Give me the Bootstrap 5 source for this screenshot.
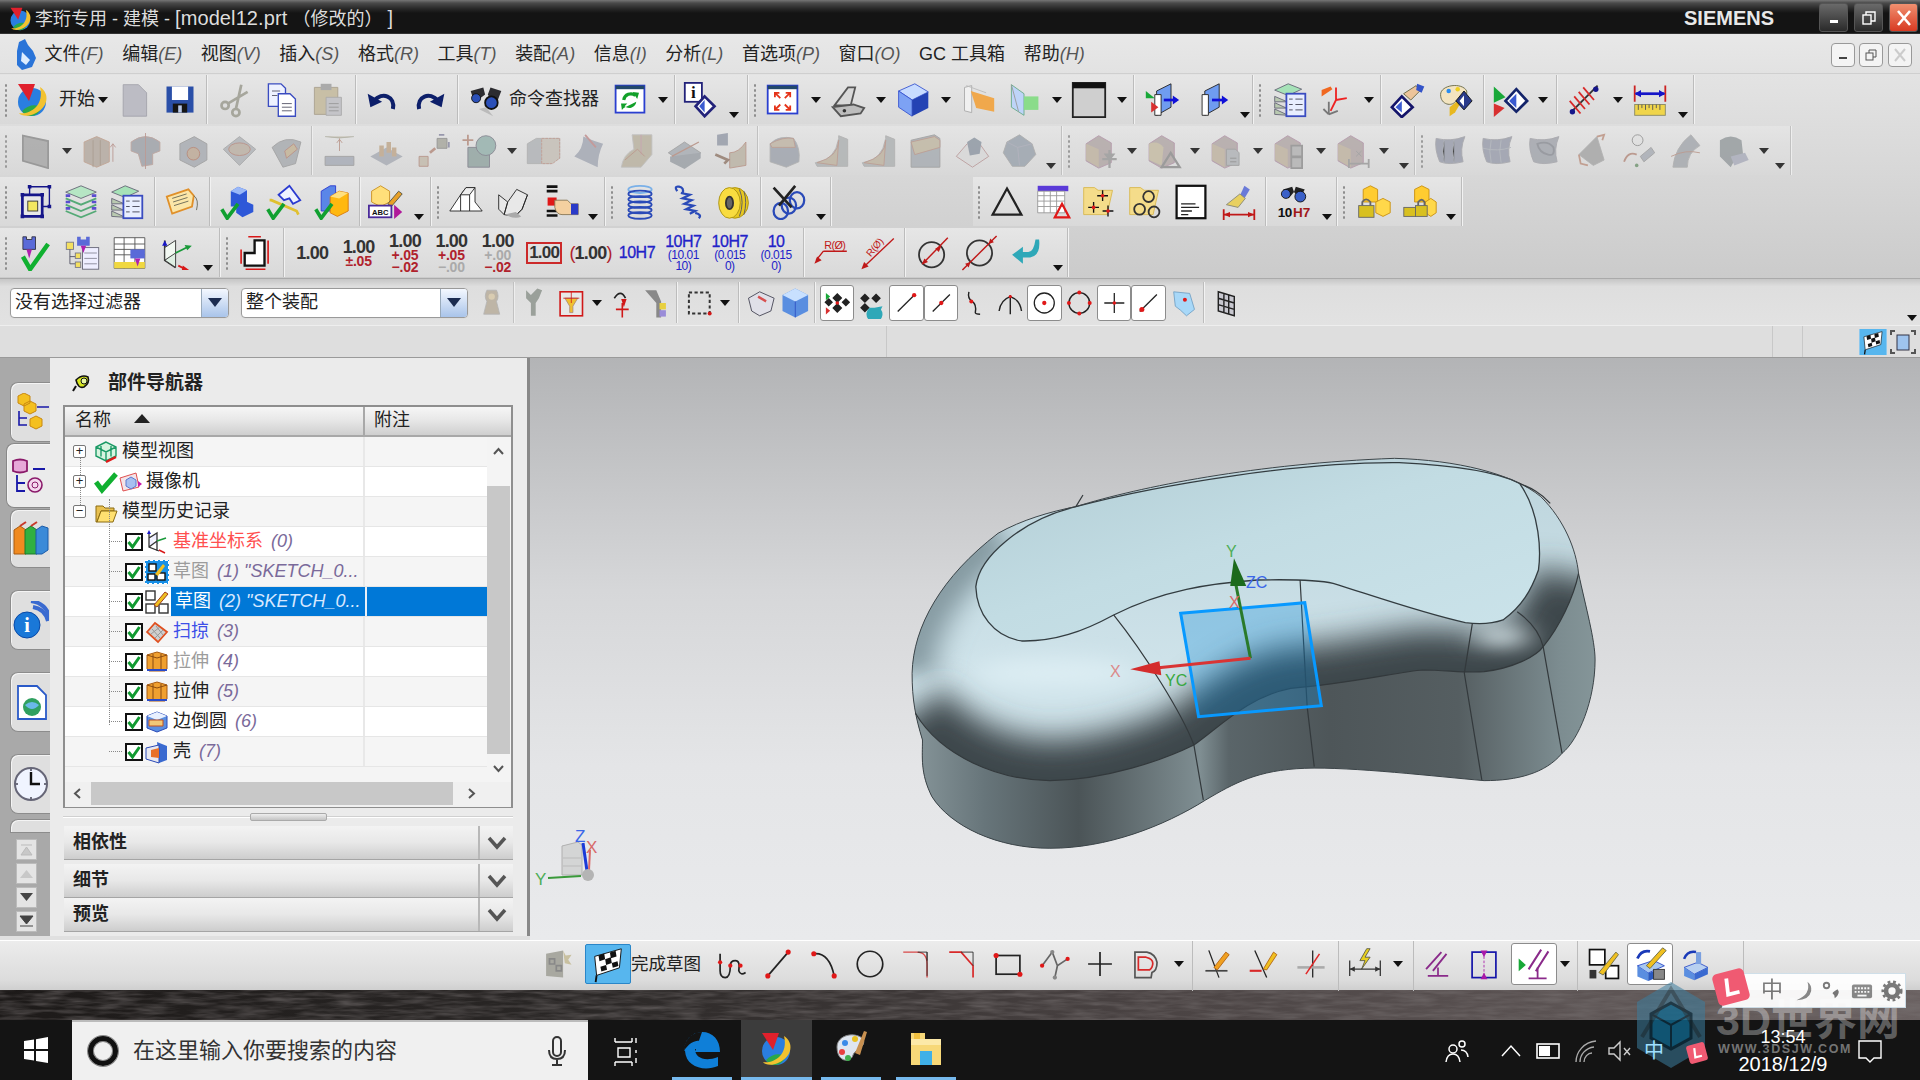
<!DOCTYPE html>
<html lang="zh-CN">
<head>
<meta charset="UTF-8">
<title>NX 建模</title>
<link href="https://cdn.jsdelivr.net/npm/bootstrap@5.3.0/dist/css/bootstrap.min.css" rel="stylesheet">
<style>
html,body{margin:0;height:100%;overflow:hidden}
body{width:1920px;height:1080px;position:relative;background:#e0e0e0;color:#222;font:18px/1.2 "Liberation Sans","Noto Sans CJK SC",sans-serif}
/* title + menu */
.titlebar{height:34px;background:linear-gradient(#767676 0,#4a4a4a 3px,#262626 9px,#141414 13px);color:#ddd;padding:4px 0 0 7px;border-bottom:1px solid #333}
.titlebar .logo{width:28px;height:28px}
.titlebar b{font-weight:400;font-size:20px;letter-spacing:.1px}
.siemens{position:absolute;left:1684px;top:6px;font-weight:700;font-size:20px;color:#e8e8e8}
.winbtn{position:absolute;top:3px;width:29px;height:29px;border-radius:3px;background:linear-gradient(#6a6a6a,#2a2a2a);border:1px solid #555;color:#fff;display:flex;align-items:center;justify-content:center}
.w-min{left:1819px}.w-max{left:1854px}.w-close{left:1889px;background:linear-gradient(#f09070,#d83a22)}
.menubar{height:40px;background:linear-gradient(#e8e8e8,#e2e2e2);padding:2px 0 0 11px;gap:18.6px;border-bottom:1px solid #cfcfcf}
.menubar em{color:#555;font-family:"Liberation Sans",sans-serif}
.menulogo{width:30px;height:34px;margin-right:-15px}
.mdibtn{position:absolute;top:43px;width:24px;height:24px;background:#f4f4f4;border:1px solid #999;border-radius:4px;display:flex;align-items:center;justify-content:center}
.m1{left:1831px}.m2{left:1859px}.m3{left:1888px}
/* toolbars */
.tb-area{background:linear-gradient(#e3e3e3,#cbcbcb);height:204px;padding-top:1px}
.tb-row{height:51px}
.tb-grp{height:49px;background:linear-gradient(#e6e6e6,#d9d9d9);box-shadow:inset -1px 0 #f2f2f2,inset -2px 0 #bcbcbc;flex:none}
.grip{width:11px;height:34px;flex:none;background:radial-gradient(circle,#8d8d8d 1px,transparent 1.4px) 4px 0/4px 5px repeat-y}
.grip-a{width:12px}.grip2{width:14px}.grip3{width:13px}
.ico{width:46px;height:36px;flex:none;display:block}
.ico-nx{width:42px;height:40px}
.w47 .ico{width:47px}
.dd{width:19px;height:36px;flex:none;display:flex;align-items:center;justify-content:center}
.dd::after{content:"";border:5px solid transparent;border-top:6px solid #111;border-bottom:0}
.dd.n{width:16px}
.dd.lo{align-items:flex-end;height:42px;padding-bottom:3px}
.tol{width:46.4px;flex:none;text-align:center;font-weight:700;font-size:18px;line-height:16px;color:#333;letter-spacing:-.8px}
.tol small{display:block;font-size:14px;line-height:12px;font-weight:700;color:#b0222c;letter-spacing:-.2px}
.tol small.off{color:#aaa}
.tol.blue{font-size:16px;letter-spacing:-.5px;font-weight:400;-webkit-text-stroke:.3px #2222c8}
.tol.blue,.tol.blue small{color:#2222c8}
.tol.blue small{font-weight:400;font-size:12px;line-height:11px;letter-spacing:-.5px;-webkit-text-stroke:0}
.tol.box span{border:2px solid #cc2a2a;padding:1px 0;display:block;margin:0 5px 0 5px;font-size:17px}
.tol.par span{color:#333}.tol.par i{color:#b0222c;font-style:normal;font-weight:400}
.pl2{padding-left:2px}.pl3{padding-left:3px}.pl4{padding-left:4px}.pl5{padding-left:5px}
.pr2{padding-right:2px}.pr3{padding-right:3px}.pr4{padding-right:4px}.pr5{padding-right:5px}.pr6{padding-right:6px}.pr7{padding-right:7px}.pr8{padding-right:8px}
.gap-l{margin-left:141px}
.mt-g{margin-left:2px}
.start-txt{margin-left:5px;font-size:18px}
.dim{opacity:.82}
.tb-row.w47 .tb-grp.dim .ico{filter:saturate(.75)}
/* selection row */
.selbar{height:47px;background:linear-gradient(#c6c6c6,#dedede 16%,#e2e2e2);padding:1px 0 0 10px;border-top:1px solid #aaa}
.sel{height:30px;background:#fff;border:1px solid #9a9a9a;border-radius:4px;flex:none;font-size:18px;padding-left:4px;overflow:hidden;box-shadow:0 0 0 1px #ddd}
.sel1{width:219px}.sel2{width:227px;margin-left:12px;margin-right:8px}
.selarrow{width:27px;height:100%;background:linear-gradient(#f4f8ff,#a9c4ea);border-left:1px solid #9ab;display:flex;align-items:center;justify-content:center;margin-left:auto}
.selarrow::after{content:"";border:7px solid transparent;border-top:9px solid #1c2c50;border-bottom:0}
.selbar .ico{width:34.6px;height:32px}
.selbar .tb-grp{background:none;height:41px}
.selbar .boxed{height:36px}
.selbar .boxed,.sk .boxed{background:#fff;border:1px solid #8c8c8c;border-radius:3px;padding:2px}
.statbar{height:33px;background:#dedede;border-top:1px solid #eee;border-bottom:1px solid #9a9a9a}
.st-a{width:887px;height:100%;border-right:1px solid #c8c8c8}
.st-b{width:886px;height:100%;border-right:1px solid #c8c8c8}
.st-c{width:30px;height:100%;border-right:1px solid #c8c8c8;margin-right:56px}
.staticon{width:28px;height:26px;flex:none;margin-right:2px}
.staticon.on{background:#8cc8ee}
/* main */
.mainarea{height:582px}
.rail{width:50px;height:578px;background:#a9a9a9;padding-top:24px;flex:none}
.rtab{margin-left:10px;height:60px;background:#dfdfdf;border:1px solid #8c8c8c;border-right:0;border-radius:8px 0 0 8px;display:flex;align-items:center;justify-content:center;box-shadow:inset 1px 1px #f4f4f4;margin-bottom:22px}
.rtab svg{width:36px;height:38px}
.rtab.t1,.rtab.on{margin-bottom:1px}
.rtab.on{margin-left:6px;height:65px;background:#ebebeb;border-color:#888}
.rtab.t3{height:59px}
.rtab.torn{height:14px;margin:-17px 0 6px 10px;border-radius:8px 0 0 0}
.navb{width:21px;height:21px;margin:0 0 3px 16px;background:#e4e4e4;border:1px solid #bbb;display:flex;align-items:center;justify-content:center}
.navb svg{width:15px;height:13px}
.panel{width:480px;height:578px;background:#ebebeb;border-right:3px solid #888;flex:none;padding:3px 0 0 13px}
.p-title{height:44px;padding-left:8px;font-weight:700;font-size:19px}
.p-title svg{width:20px;height:20px;margin-right:17px}
.treebox{width:450px;height:403px;border:2px solid #8e8e8e;background:#f4f4f4;position:relative}
.t-head{height:30px;background:linear-gradient(#f6f6f6,#e8e8e8 45%,#cfcfcf);border-bottom:2px solid #a8a8a8}
.t-col1{width:300px;padding-left:10px;height:100%;border-right:2px solid #a8a8a8;flex:none;position:relative}
.t-col2{padding-left:9px}
.sorttri{position:absolute;left:69px;top:7px;border:8px solid transparent;border-bottom:9px solid #222;border-top:0}
.t-rows{width:422px}
.t-r{height:30px;position:relative;background:#fff;border-bottom:1px solid #e6e6e6;font-size:18px;white-space:nowrap}
.t-r.alt{background:#f5f5f5}
.t-name{width:300px;height:100%;border-right:2px solid #e8e8e8;flex:none;padding-left:6px;overflow:hidden;position:relative}
.t-name em{color:#7a6a9a;margin-left:8px}
.t-r.kid .t-name{padding-left:60px}
.t-r.kid::before{content:"";position:absolute;left:44px;top:14px;width:13px;border-top:1px dotted #888}
.t-vline{position:absolute;left:44px;top:92px;height:226px;border-left:1px dotted #888}
.t-vline2{position:absolute;left:15px;top:40px;height:60px;border-left:1px dotted #888}
.expander{width:13px;height:13px;border:1px solid #777;border-radius:2px;background:#fff;flex:none;margin:0 8px 0 2px;font-size:13px;line-height:10px;text-align:center;position:relative;z-index:1}
.tic{width:24px;height:24px;flex:none}
.cbx{width:18px;height:18px;flex:none;margin-right:2px}
.txt-red{color:#ff4f4f}.txt-gray{color:#9c9c9c}.txt-blue{color:#3d4fe8}
.t-sel{background:#0078d7;color:#fff;position:absolute;left:106px;top:0;width:316px;height:29px;padding-left:4px;overflow:hidden}
.t-sel em{color:#d8e8ff;margin-left:8px}
.t-sel i.cut{width:192px;height:100%;display:flex;align-items:center;font-style:normal;border-right:2px solid #e8f0f8;flex:none}
.vs{position:absolute;left:422px;top:30px;width:24px;height:346px;background:#f4f4f4}
.vs-thumb{position:absolute;top:49px;left:0;width:23px;height:268px;background:#c8c8c8}
.hs{position:absolute;left:0;top:375px;width:446px;height:25px;background:#f0f0f0}
.hs-thumb{position:absolute;left:26px;top:0;width:362px;height:23px;background:#c8c8c8}
.chev{position:absolute;width:13px;height:13px}
.c-up{left:5px;top:8px}.c-dn{left:5px;top:325px}.c-l{left:6px;top:5px}.c-r{left:400px;top:5px}
.splitter{height:18px;width:450px;position:relative}
.splitter::before{content:"";position:absolute;left:0;right:0;top:8px;border-top:1px solid #d0d0d0;box-shadow:0 1px #fff}
.split-h{position:absolute;left:187px;top:5px;width:77px;height:8px;background:linear-gradient(#eee,#c4c4c4);border:1px solid #aaa;border-radius:2px}
.acc-r{width:449px;height:34px;background:linear-gradient(#f3f3f3,#e8e8e8 50%,#cdcdcd);border-bottom:1px solid #a5a5a5;margin-left:1px;font-weight:700;padding-left:9px;font-size:18px}
.acc-sep{margin-left:auto;width:35px;height:100%;border-left:2px solid #b8b8b8;display:flex;align-items:center;justify-content:center}
.acc-sep svg{width:20px;height:14px}
.viewport{width:1390px;height:582px;background:linear-gradient(#b3b4b6,#d6d7d9 40%,#e4e5e7 70%,#e9eaec);flex:none;overflow:hidden}
.scene{display:block}
.lines path{vector-effect:non-scaling-stroke}
/* sketch toolbar */
.sk{height:50px;background:linear-gradient(#ececec,#dcdcdc 80%,#cfcfcf);border-top:1px solid #fff;padding-left:535px;position:relative}
.sk .tb-grp{background:none;box-shadow:none;height:46px}
.sk .ico{height:34px}
.sk .skend{height:50px;background:#bcbcbc;width:1px;margin-right:-1px;flex:none}
.sk .boxed{height:42px}
.sk-txt{font-size:17.5px;margin-right:8px;white-space:nowrap}
.flagon{background:#57b6ee;border:1px solid #2a86c8;border-radius:2px;margin-left:4px}
.sk .flagon{height:40px}
/* desktop + taskbar */
.desk{height:30px;background:linear-gradient(90deg,#1d1a19,#2a2726 30%,#4a4343 60%,#6a6161);overflow:hidden}
.taskbar{height:60px;background:#141414;color:#fff}
.startbtn{width:72px;height:60px;flex:none}
.searchbox{width:516px;height:60px;background:#f0f0f0;color:#333;font-size:22px;padding-left:16px;border-top:2px solid #bbb;flex:none}
.searchbox .rng{width:30px;height:30px;border:5px solid #111;border-radius:50%;margin-right:15px;box-shadow:0 0 0 1px #888,inset 0 0 0 1px #888}
.mic{width:22px;height:32px;margin-left:auto;margin-right:20px}
.tk{height:60px;flex:none;display:flex;align-items:center;justify-content:center}
.tk svg{width:40px;height:40px}
.tk.act{border-bottom:3px solid #76b9ed}
.tk-view{width:72px}
.tk-e{width:60px;margin-left:12px}
.tk-nx{width:71px;margin-left:9px;background:#3c3c3c}
.tk-p{width:60px;margin-left:9px}
.tk-f{width:60px;margin-left:15px}
.tray-i{position:absolute;top:1038px;width:26px;height:26px}
.tr1{left:1444px}.tr2{left:1498px}.tr3{left:1535px}.tr4{left:1572px}.tr5{left:1606px}.tr6{left:1857px}
.clock{position:absolute;left:1729px;top:1026px;width:108px;text-align:center;color:#fff}
.clock .tm{font-size:18px;line-height:22px}
.clock .dt{font-size:20px;line-height:28px;margin-top:2px}
.trayzh{position:absolute;left:1644px;top:1039px;font-size:20px;color:#9fe0ff;z-index:4}
/* overlays */
.wm-hex{position:absolute;left:1636px;top:981px;width:70px;height:88px;opacity:.75}
.wm-big{position:absolute;left:1716px;top:1000px;font:700 43px/40px "Liberation Sans","Noto Sans CJK SC",sans-serif;color:rgba(255,255,255,.32);white-space:nowrap}
.wm-url{position:absolute;left:1718px;top:1042px;font:700 12.5px/14px "Liberation Sans",sans-serif;letter-spacing:1.6px;color:rgba(255,255,255,.42);white-space:nowrap}
.ime{position:absolute;left:1722px;top:973px;width:184px;height:35px;background:#fff;border:1px solid #cfe0ea;color:#777;padding-left:38px;gap:8px;font-size:22px;opacity:.95}
.ime svg{width:22px;height:22px;flex:none}
.imel{position:absolute;left:1712px;top:968px;width:38px;height:38px;z-index:3}
.trayl{position:absolute;left:1686px;top:1042px;width:22px;height:22px;z-index:3}
</style>
</head>
<body>

<svg width="0" height="0" class="position-absolute">
<defs>
<linearGradient id="gFace" x1="0" y1="0" x2="1" y2="1"><stop offset="0" stop-color="#b2cdd5"/><stop offset=".45" stop-color="#c2dce3"/><stop offset="1" stop-color="#cbe3ea"/></linearGradient>
<linearGradient id="gFillet" x1="0" y1="0" x2="0" y2="1"><stop offset="0" stop-color="#bcd4dc"/><stop offset=".55" stop-color="#cfe3ea"/><stop offset="1" stop-color="#cfe3ea"/></linearGradient>
<linearGradient id="gWall" x1="0" y1="0" x2="1" y2="0"><stop offset="0" stop-color="#8d9ca0"/><stop offset=".12" stop-color="#67757a"/><stop offset=".25" stop-color="#4b5457"/><stop offset=".42" stop-color="#7f8e92"/><stop offset=".46" stop-color="#5a6569"/><stop offset=".6" stop-color="#4e5659"/><stop offset=".78" stop-color="#555e61"/><stop offset=".92" stop-color="#7c8c90"/><stop offset="1" stop-color="#8a9b9e"/></linearGradient>
<filter id="blur1" x="-20%" y="-50%" width="140%" height="200%"><feGaussianBlur stdDeviation="30 48"/></filter>
<filter id="blur2" x="-100%" y="-200%" width="300%" height="500%"><feGaussianBlur stdDeviation="30 30"/></filter>
<filter id="grain"><feTurbulence type="fractalNoise" baseFrequency=".03 .25" numOctaves="3"/><feColorMatrix values="0 0 0 0 .2 0 0 0 0 .18 0 0 0 0 .18 0 0 0 1 -.35"/></filter>
<clipPath id="clipBody"><path d="M415 200C550 140 800 70 1090 55C1220 60 1340 100 1400 170C1450 240 1475 330 1480 400C1495 500 1515 600 1515 660C1515 780 1480 900 1445 940C1410 1000 1350 1022 1280 1022C1180 1010 1000 980 900 985C800 990 750 1030 690 1080C600 1160 480 1225 360 1225C250 1225 150 1160 110 1070C85 1000 90 950 90 900C75 830 68 780 68 700C70 560 130 410 250 280C300 240 360 215 415 200Z"/></clipPath>
</defs>
<symbol id="nx" viewBox="0 0 40 40"><circle cx="19" cy="22" r="14" fill="#2a7ee0"/><path d="M9 31q9-9 20-4-4 9-11 9-6 0-9-5z" fill="#2aa84a"/><path d="M5 4h17l-6 17z" fill="#e0202c"/><path d="M27 7c10 6 9 21-6 27-6 3-13 2-15-1 9 2 26-6 21-26z" fill="#f2c230"/></symbol>
<symbol id="new" viewBox="0 0 40 40"><path d="M8 3h17l9 9v26H8z" fill="#bcbcc4" stroke="#a4a4ac"/></symbol>
<symbol id="save" viewBox="0 0 40 40"><path d="M5 5h30v29H5z" fill="#2a4fa8"/><path d="M11 5h18v15H11z" fill="#fff"/><path d="M12 24h16v10H12z" fill="#151515"/><path d="M18 26h4v8h-4z" fill="#b7c7e8"/></symbol>
<symbol id="cut" viewBox="0 0 40 40"><g fill="none" stroke="#a6a69c" stroke-width="3"><circle cx="9" cy="26" r="4"/><circle cx="21" cy="34" r="4"/><path d="M12 24L34 11M21 30L27 3"/></g></symbol>
<symbol id="copy" viewBox="0 0 40 40"><path d="M6 2h14l5 5v20H6z" fill="#eef2ff" stroke="#3a4cc0" stroke-width="1.5"/><path d="M17 13h13l6 6v19H17z" fill="#fff" stroke="#3a4cc0" stroke-width="1.5"/><path d="M10 10h9M10 15h6M21 24h11M21 28h11M21 32h11" stroke="#556"/></symbol>
<symbol id="paste" viewBox="0 0 40 40"><path d="M6 6h26v30H6z" fill="#c8bfa6" stroke="#aaa290"/><path d="M13 2h12v7H13z" fill="#aaa"/><path d="M19 17h17v20H19z" fill="#c4c4c8" stroke="#aaa"/><path d="M22 24h11M22 28h11M22 32h11" stroke="#999"/></symbol>
<symbol id="undo" viewBox="0 0 40 40"><path d="M31 30c3-14-12-20-21-9" fill="none" stroke="#0d1f6a" stroke-width="4.5"/><path d="M3 13l3 15 13-6z" fill="#0d1f6a"/></symbol>
<symbol id="redo" viewBox="0 0 40 40"><path d="M9 30c-3-14 12-20 21-9" fill="none" stroke="#0d1f6a" stroke-width="4.5"/><path d="M37 13l-3 15-13-6z" fill="#0d1f6a"/></symbol>
<symbol id="binoc" viewBox="0 0 40 40"><path d="M3 10l14-4 2 8-12 9zM37 10l-12-4-3 8 8 14z" fill="#2c2c30"/><circle cx="9" cy="18" r="5" fill="#2b50b8" stroke="#111"/><circle cx="26" cy="23" r="7" fill="#2b50b8" stroke="#111" stroke-width="2"/><path d="M12 30l16 8-8-10z" fill="#bbb"/></symbol>
<symbol id="refresh" viewBox="0 0 40 40"><rect x="4" y="4" width="32" height="30" fill="#fff" stroke="#2a3fd0" stroke-width="2"/><rect x="4" y="4" width="32" height="4" fill="#22486a"/><path d="M13 20a8 8 0 0 1 13-5" fill="none" stroke="#12a02a" stroke-width="3.5"/><path d="M23 11l7 1-2 7zM27 22a8 8 0 0 1-13 5l3-3-7 0 1 7 2-2" fill="#12a02a"/></symbol>
<symbol id="fit" viewBox="0 0 40 40"><rect x="3" y="4" width="33" height="31" fill="#fff" stroke="#2a3fd0" stroke-width="2"/><rect x="3" y="4" width="33" height="4" fill="#22486a"/><path d="M12 13l5 5M27 13l-5 5M12 30l5-5M27 30l-5-5M11 17v-5h5M28 17v-5h-5M11 26v5h5M28 26v5h-5" fill="none" stroke="#e5341a" stroke-width="2"/></symbol>
<symbol id="scan" viewBox="0 0 40 40"><path d="M5 26L20 6h8l-5 20z" fill="#d9d9d9" stroke="#555" stroke-width="2"/><path d="M3 28l23-3 12 4-4 6-22 3z" fill="#bdbdbd" stroke="#555" stroke-width="2"/><circle cx="16" cy="32" r="2" fill="#333"/></symbol>
<symbol id="cube" viewBox="0 0 40 40"><path d="M4 10L22 2l15 9-18 9z" fill="#c8dcff" stroke="#3a56d0"/><path d="M4 10l15 10v18L4 28z" fill="#7da2f4" stroke="#3a56d0"/><path d="M19 20l18-9v18l-18 9z" fill="#2443b4"/></symbol>
<symbol id="shade" viewBox="0 0 40 40"><path d="M5 6l8-2 0 30-8-2z" fill="#f0f0f0" stroke="#aaa"/><path d="M12 10l26 8v15l-20-4z" fill="#f0a84c"/><path d="M7 4l22 8" stroke="#bbb"/></symbol>
<symbol id="pane" viewBox="0 0 40 40"><path d="M6 3l14 10 0 24-14-9z" fill="#bed4f8" stroke="#6a8"/><path d="M20 16h16v15H20z" fill="#8adc8a"/><path d="M6 3l8 30" stroke="#999"/></symbol>
<symbol id="bwin" viewBox="0 0 40 40"><rect x="2" y="1" width="36" height="38" fill="#cfcfcf" stroke="#222" stroke-width="2"/><rect x="2" y="1" width="36" height="6" fill="#111"/></symbol>
<symbol id="vis1" viewBox="0 0 40 40"><path d="M14 10l16-8v26l-16 9z" fill="#6f9cf0" stroke="#222"/><path d="M12 14h7v23h-7z" fill="#fff" stroke="#222"/><path d="M2 10l10 8H2z" fill="#18a838"/><path d="M8 22l8 6-8 6z" fill="#d83030"/><path d="M22 20h14" stroke="#1010d8" stroke-width="3"/><path d="M39 20l-7-5v10z" fill="#1010d8"/></symbol>
<symbol id="vis2" viewBox="0 0 40 40"><path d="M12 10l16-8v26l-16 9z" fill="#6f9cf0" stroke="#222"/><path d="M9 14h7v23H9z" fill="#fff" stroke="#222"/><path d="M20 20h14" stroke="#1010d8" stroke-width="3"/><path d="M38 20l-7-5v10z" fill="#1010d8"/></symbol>
<symbol id="llist" viewBox="0 0 40 40"><path d="M3 9l15-7 15 6-15 7z" fill="#a6e2b8" stroke="#667"/><path d="M3 16l14 6-14 0zM3 23l13 6-13 0zM3 30l15 7-15-1z" fill="#b9c9b0" stroke="#667"/><rect x="16" y="13" width="21" height="25" fill="#e8eeff" stroke="#3a4cc0" stroke-width="2"/><path d="M19 19h4M26 19h8M19 25h4M26 25h8M19 31h4M26 31h8" stroke="#445"/></symbol>
<symbol id="layers" viewBox="0 0 40 40"><path d="M3 9L20 2l17 7-17 7z" fill="#b6e6c4" stroke="#667"/><path d="M3 16l17 7 17-7M3 23l17 7 17-7M3 30l17 7 17-7" fill="none" stroke="#5a7" stroke-width="2"/><path d="M3 13h5M32 13h5M3 20h5M32 20h5M3 27h5M32 27h5" stroke="#5a4cd0" stroke-width="3"/></symbol>
<symbol id="csys" viewBox="0 0 40 40"><path d="M20 20l12-2M20 20l-6 12M20 6v14" stroke="#e22" stroke-width="2"/><path d="M4 16l12-8-2-3-10 4z" fill="#f06820"/><path d="M12 22v14M12 36l10-4M12 36l-6-6" stroke="#777" stroke-width="2" fill="none"/></symbol>
<symbol id="handd" viewBox="0 0 40 40"><path d="M14 13l14-9 4 6-10 10z" fill="#ecc49a" stroke="#664"/><path d="M29 2l8 3-3 7-6-3z" fill="#3454c8"/><path d="M12 16l12 12-12 11L1 28z" fill="#fff" stroke="#14146a" stroke-width="3"/><path d="M12 21v13l-7-6z" fill="#3a5ad0"/></symbol>
<symbol id="palette" viewBox="0 0 40 40"><path d="M4 14C4 3 28 0 33 10c2 7-10 8-13 12-3 5-16 4-16-8z" fill="#f3e4c0" stroke="#664"/><circle cx="13" cy="10" r="2.500" fill="#2a8cf0"/><circle cx="23" cy="8" r="2.500" fill="#f0d020"/><path d="M14 28l10-8 3 2-7 12-6 4z" fill="#e8b820"/><path d="M30 10l9 11-9 10-9-10z" fill="#2a3a8a" stroke="#111"/><path d="M30 15v12l-5-6z" fill="#fff"/></symbol>
<symbol id="playd" viewBox="0 0 40 40"><path d="M2 5l13 12-13 6z" fill="#18a838"/><path d="M2 24l12 5-12 10z" fill="#d83030"/><path d="M27 8l12 13-12 12-12-12z" fill="#fff" stroke="#14246a" stroke-width="3"/><path d="M27 13v16l-8-8z" fill="#3a5ad0"/></symbol>
<symbol id="hatch" viewBox="0 0 40 40"><path d="M4 34L34 4" stroke="#333" stroke-width="2"/><path d="M8 16l12 14M13 11l12 14M18 6l12 14M3 21l12 14" stroke="#d82a2a" stroke-width="2"/><circle cx="6" cy="33" r="3" fill="#16168a"/><circle cx="32" cy="8" r="3" fill="#16168a"/></symbol>
<symbol id="ruler" viewBox="0 0 40 40"><path d="M3 4v18M37 4v18" stroke="#c22" stroke-width="2"/><path d="M4 13h32" stroke="#1414c8" stroke-width="3"/><path d="M3 13l7-4v8zM37 13l-7-4v8z" fill="#1414c8"/><rect x="3" y="25" width="34" height="12" fill="#f0d54a" stroke="#886"/><path d="M7 25v6M11 25v4M15 25v6M19 25v4M23 25v6M27 25v4M31 25v6" stroke="#555"/></symbol>
<symbol id="g-plane" viewBox="0 0 40 40"><path d="M6 3l28 6v30L6 31z" fill="#a8a8a8" stroke="#8c8c8c" stroke-width="2"/></symbol>
<symbol id="g-ext" viewBox="0 0 40 40"><path d="M4 10l14-6 14 6v22l-14 6-14-6z" fill="#b8a99c" stroke="#c69a80"/><path d="M14 8v30M22 8v28" stroke="#a5907e"/><path d="M36 12v20M33 16l3-4 3 4" stroke="#c08a80" fill="none"/></symbol>
<symbol id="g-rev" viewBox="0 0 40 40"><path d="M4 10q16-12 32 0v10l-8 3v12l-12 2-4-14-8-3z" fill="#9ea2ac" stroke="#c09a90"/><path d="M20 0v40" stroke="#c08a80"/></symbol>
<symbol id="g-hole" viewBox="0 0 40 40"><path d="M6 12l16-8 14 8v18l-14 8-16-8z" fill="#a8acb4" stroke="#999"/><circle cx="21" cy="23" r="7" fill="#c4a98e" stroke="#c07860"/></symbol>
<symbol id="g-boss" viewBox="0 0 40 40"><path d="M2 18l18-14 18 14-18 18z" fill="#b0b4ba" stroke="#a0a0a0"/><ellipse cx="20" cy="18" rx="12" ry="7" fill="#bfb0a0" stroke="#c08070"/></symbol>
<symbol id="g-pock" viewBox="0 0 40 40"><path d="M4 16Q18 2 36 10l-6 24-14 4z" fill="#a8acb2" stroke="#999"/><path d="M18 20l10-8 4 6-12 10z" fill="#c9b48c" stroke="#c08070"/></symbol>
<symbol id="g-pad" viewBox="0 0 40 40"><path d="M4 4q16 3 32 0" fill="#c2b79e" stroke="#aa9"/><path d="M20 6v14M17 11l3-4 3 4" stroke="#c08a78" fill="none"/><path d="M4 26h32v10H4z" fill="#a6adba" stroke="#999"/></symbol>
<symbol id="g-pads" viewBox="0 0 40 40"><path d="M2 26l18-10 18 10-18 10z" fill="#a8adb8"/><path d="M12 14h5v12h-5zM20 10h5v12h-5zM26 16h5v10h-5z" fill="#c7a781"/></symbol>
<symbol id="g-arr" viewBox="0 0 40 40"><path d="M4 26h10v11H4z" fill="#c7bba8" stroke="#b87"/><path d="M24 6h11v11H24z" fill="#a9a99c" stroke="#888"/><path d="M16 22l6-5" stroke="#c08a78" stroke-width="3"/><path d="M26 2h6M37 10v6" stroke="#88a" stroke-width="2"/></symbol>
<symbol id="g-uni" viewBox="0 0 40 40"><path d="M6 16h24v22H6z" fill="#8fa6a2" stroke="#778"/><circle cx="26" cy="14" r="11" fill="#8fb4ae" stroke="#778"/><path d="M6 2v12M0 8h12" stroke="#c08a78" stroke-width="2"/></symbol>
<symbol id="g-blk" viewBox="0 0 40 40"><path d="M2 12l10-6h26v22l-10 6H2z" fill="#b0b4b8" stroke="#aaa"/><path d="M18 6h20v22l-8 6H18z" fill="#c8c0b4" stroke="#c89080" stroke-dasharray="3 1"/></symbol>
<symbol id="g-cut" viewBox="0 0 40 40"><path d="M12 4q14 6 22 8-6 12-6 26L2 26q10-8 10-22z" fill="#a3a9b8"/><path d="M14 2l12 14" stroke="#c88" stroke-width="2"/></symbol>
<symbol id="g-pipe" viewBox="0 0 40 40"><path d="M14 2h22v22L24 38H2q2-14 14-20z" fill="#bdb29a" stroke="#bbb"/><path d="M24 2v22" stroke="#c9a"/><path d="M6 30l14-12 8 8" stroke="#c08a78" fill="none"/></symbol>
<symbol id="g-sp" viewBox="0 0 40 40"><path d="M2 22l18-12 18 12-18 12z" fill="#a8aeb6" stroke="#999"/><path d="M4 26v6l16 8 18-12v-6" fill="#9aa0a8"/><path d="M6 26L36 10" stroke="#c08a78" stroke-width="1.500"/></symbol>
<symbol id="g-trim" viewBox="0 0 40 40"><path d="M4 2l12-2v14H4z" fill="#949cae"/><path d="M18 22q10 0 18-12v26l-18 3z" fill="#bdb4a0" stroke="#c08a78"/><path d="M2 24l14 6-4 4" stroke="#9a7a66" stroke-width="3" fill="none"/></symbol>
<symbol id="g-f1" viewBox="0 0 40 40"><path d="M4 12Q14 2 30 6q8 10 6 26l-14 6L4 32z" fill="#9da4b0" stroke="#aaa"/><path d="M4 12q14-8 26-6l2 10H6z" fill="#c4b6a0" stroke="#c09080"/></symbol>
<symbol id="g-f2" viewBox="0 0 40 40"><path d="M28 3l10 4v30H4l-2-4q22-2 26-27z" fill="#aeb2b4" stroke="#aaa"/><path d="M28 8q0 18-24 25l22 3z" fill="#c2b49a" stroke="#c09080"/></symbol>
<symbol id="g-f3" viewBox="0 0 40 40"><path d="M4 8l26-6 6 4v32H4z" fill="#a6adb4" stroke="#999"/><path d="M4 10l26-6 6 4v8L8 24z" fill="#c4b89c" stroke="#c09080"/></symbol>
<symbol id="g-frm" viewBox="0 0 40 40"><path d="M2 26L14 12h14l10 14-18 12z" fill="#d9d9d9" stroke="#c09090"/><path d="M14 10l8-5 8 5-2 13-11 2z" fill="#8c98a8"/></symbol>
<symbol id="g-gem" viewBox="0 0 40 40"><path d="M20 2l14 10 4 12-12 13H12L2 22 6 10z" fill="#98a4b2" stroke="#a5a5a5"/><path d="M6 10l12 6 16-4M18 16l2 20" stroke="#aab" fill="none"/></symbol>
<symbol id="g-c1" viewBox="0 0 40 40"><path d="M4 12L18 3l14 8v22l-14 6-14-8z" fill="#b5a7a6" stroke="#b68ca8"/><path d="M4 12l14 6v20L4 30z" fill="#c4b49a"/><path d="M26 24l4 5 4-5-8 0zM30 19v20M22 29h16" stroke="#9a9a9a" stroke-width="2.500" fill="none"/></symbol>
<symbol id="g-c2" viewBox="0 0 40 40"><path d="M4 12L18 3l14 8v22l-14 6-14-8z" fill="#b5a7a6" stroke="#b68ca8"/><path d="M4 12q10-4 16 4l-2 20-14-6z" fill="#c9bc9c"/><path d="M28 22l10 16H18z" fill="none" stroke="#8e8e8e" stroke-width="2.500"/></symbol>
<symbol id="g-c3" viewBox="0 0 40 40"><path d="M4 12L18 3l14 8v22l-14 6-14-8z" fill="#b5a7a6" stroke="#b68ca8"/><path d="M4 12l14 6v20L4 30z" fill="#c4b49a"/><path d="M20 18h10l4 4v14H20z" fill="#b0b4b8" stroke="#999"/><path d="M24 28h7M24 32h7" stroke="#888"/></symbol>
<symbol id="g-c4" viewBox="0 0 40 40"><path d="M4 12L18 3l14 8v22l-14 6-14-8z" fill="#b5a7a6" stroke="#b68ca8"/><path d="M4 12l14 6v20L4 30z" fill="#c4b49a"/><path d="M22 14h12v12H22zM22 27h12v12H22z" fill="#b4b4b4" stroke="#909090" stroke-width="2"/></symbol>
<symbol id="g-c5" viewBox="0 0 40 40"><path d="M4 12L18 3l14 8v22l-14 6-14-8z" fill="#b5a7a6" stroke="#b68ca8"/><path d="M4 12l14 6v20L4 30z" fill="#c4b49a"/><path d="M16 29v10M38 29v10M16 34h22" stroke="#9a9a9a" stroke-width="2"/><path d="M24 20l6 6M30 20l-6 6" stroke="#999"/></symbol>
<symbol id="g-s1" viewBox="0 0 40 40"><path d="M4 6q16 4 32-2-6 14-2 28Q18 36 8 32 2 18 4 6z" fill="#989eb0" stroke="#a0a0a8"/><path d="M13 8q-3 12 0 25M24 8q-3 12 0 25" stroke="#aeb2bc"/></symbol>
<symbol id="g-s2" viewBox="0 0 40 40"><path d="M4 6q16 4 32-2-6 14-2 28Q18 36 8 32 2 18 4 6z" fill="#989eb0" stroke="#a0a0a8"/><path d="M13 8q-3 12 0 25M24 8q-3 12 0 25M4 17q16 4 31-1" stroke="#aeb2bc" fill="none"/></symbol>
<symbol id="g-s3" viewBox="0 0 40 40"><path d="M4 6q16 4 32-2-6 14-2 28Q18 36 8 32 2 18 4 6z" fill="#a2a6b0" stroke="#a0a0a8"/><path d="M12 12q12-4 18 4 2 10-6 8-10-2-12-12z" fill="none" stroke="#8a8e98" stroke-width="2"/></symbol>
<symbol id="g-s4" viewBox="0 0 40 40"><path d="M6 24L26 4l8 26-12 6z" fill="#a6a6a6" stroke="#aaa"/><path d="M26 4l8-2-2 6M6 24l2 10 8 2" stroke="#c8907a" stroke-width="2" fill="none"/></symbol>
<symbol id="g-s5" viewBox="0 0 40 40"><circle cx="19" cy="8" r="6" fill="none" stroke="#888"/><path d="M4 32q4-12 14-8" stroke="#c08a78" fill="none" stroke-width="2"/><path d="M22 26l12-10 4 6-12 10z" fill="#a8adb8" stroke="#999"/><circle cx="18" cy="36" r="2" fill="#6a9a6a"/></symbol>
<symbol id="g-s6" viewBox="0 0 40 40"><path d="M6 38q2-22 20-36l10 12Q22 22 22 38z" fill="#a4a9b0" stroke="#aaa"/><path d="M4 26q16-8 32-4" stroke="#c08a78" fill="none"/></symbol>
<symbol id="g-s7" viewBox="0 0 40 40"><path d="M6 8q12-8 24 0l2 18q-10 2-14 12L6 26z" fill="#959ca0"/><path d="M18 26l16-4 4 8-16 6z" fill="#a9adc0"/></symbol>
<symbol id="boxs" viewBox="0 0 40 40"><path d="M14 3h22v22H14z" fill="none" stroke="#16168a" stroke-width="1.500"/><path d="M6 12h22v24H6z" fill="#e8e8e8" stroke="#16168a" stroke-width="3"/><rect x="12" y="19" width="11" height="11" fill="#f4e860" stroke="#333"/><path d="M4 10h4v4H4zM26 10h4v4h-4zM4 34h4v4H4zM26 34h4v4h-4zM34 1h4v4h-4zM34 23h4v4h-4zM12 1h4v4h-4z" fill="#16168a"/></symbol>
<symbol id="tag" viewBox="0 0 40 40"><path d="M2 14l24-8 6 7-2 12-22 8z" fill="#fbe6a8" stroke="#e0902a" stroke-width="2"/><path d="M8 16l16-5M9 20l16-5M10 24l16-5" stroke="#665"/><path d="M32 13q6 4 3 16" stroke="#665" fill="none"/></symbol>
<symbol id="as1" viewBox="0 0 40 40"><path d="M12 8l8-5 10 4v18l-18 0z" fill="#2e58d8"/><path d="M18 24l10-5 9 4v8l-12 6-7-5z" fill="#2e58d8"/><path d="M12 8l8-5 10 4-8 5z" fill="#9ab8f8"/><path d="M2 28l6 10L20 22" fill="none" stroke="#10a030" stroke-width="4"/></symbol>
<symbol id="as2" viewBox="0 0 40 40"><path d="M14 12l12-10 12 16-8 4-4-6-6 2z" fill="#eef2ff" stroke="#2a3ad0" stroke-width="2"/><path d="M4 18h2l28 12 2 4" stroke="#e0c030" stroke-width="3" fill="none"/><path d="M2 28l6 10L20 22" fill="none" stroke="#10a030" stroke-width="4"/></symbol>
<symbol id="as3" viewBox="0 0 40 40"><path d="M8 8l10-6h6v28H8z" fill="#5a86e8" stroke="#2a3ad0"/><path d="M18 14l10-6 10 2v20l-12 6-8-4z" fill="#ffb810" stroke="#d87a10"/><path d="M18 14l10-6 10 2-10 6z" fill="#ffe080"/><path d="M2 28l6 10L20 22" fill="none" stroke="#10a030" stroke-width="4"/></symbol>
<symbol id="wave1" viewBox="0 0 40 40"><path d="M2 30l12-18 6-8 10 0v16l8 10H2z" fill="#fff" stroke="#222"/><path d="M14 12l6-8 10 0-6 8zM14 12v18M24 12v18" stroke="#222" fill="#eee"/></symbol>
<symbol id="wave2" viewBox="0 0 40 40"><path d="M3 12l10 8-4 14L3 28zM13 20l10-14 12 6-6 16-8 8-12-2z" fill="#e8e8e8" stroke="#222"/><path d="M21 36l8-8 6-16" stroke="#222" fill="none"/><path d="M10 34q12 6 18 2l-6-5z" fill="#aaa"/></symbol>
<symbol id="hdim" viewBox="0 0 40 40"><path d="M3 3h12M3 8h12M3 30h12M3 35h12" stroke="#111" stroke-width="3"/><rect x="4" y="15" width="10" height="9" fill="#e01818"/><path d="M12 18h14l4 4h8v12H20q-6 0-8-8z" fill="#f4d0a0" stroke="#875"/><rect x="30" y="22" width="8" height="12" fill="#2a3ac8"/></symbol>
<symbol id="coil" viewBox="0 0 40 40"><ellipse cx="20" cy="6" rx="13" ry="4" fill="none" stroke="#7ab0e8" stroke-width="2"/><g fill="none" stroke="#2a4ab8" stroke-width="2"><ellipse cx="20" cy="11" rx="13" ry="3.600"/><ellipse cx="20" cy="17" rx="13" ry="3.600"/><ellipse cx="20" cy="23" rx="13" ry="3.600"/><ellipse cx="20" cy="29" rx="13" ry="3.600"/><ellipse cx="20" cy="35" rx="13" ry="3.600"/></g></symbol>
<symbol id="spring" viewBox="0 0 40 40"><g fill="none" stroke="#2a4ab8" stroke-width="2.500"><path d="M8 8q-4-6 2-5t4 7"/><path d="M12 10l10 2-8 4 10 2-8 4 10 2-8 4 10 2-6 3"/><path d="M28 32q8 2 4 6"/></g></symbol>
<symbol id="washer" viewBox="0 0 40 40"><ellipse cx="21" cy="21" rx="15" ry="17" fill="#e8c820" stroke="#a89010"/><ellipse cx="15" cy="21" rx="12" ry="17" fill="#f8dc40" stroke="#a89010"/><ellipse cx="15" cy="21" rx="4" ry="7" fill="#666" stroke="#333" stroke-width="2"/><path d="M26 6q6 14 0 30M31 8q4 12 0 26" stroke="#556" fill="none"/></symbol>
<symbol id="xspr" viewBox="0 0 40 40"><g fill="none" stroke="#2a4ab8" stroke-width="2.500"><ellipse cx="12" cy="30" rx="8" ry="9"/><ellipse cx="21" cy="24" rx="8" ry="9"/><ellipse cx="30" cy="18" rx="8" ry="9"/></g><path d="M4 4l20 22M28 2L10 24" stroke="#222" stroke-width="3"/></symbol>
<symbol id="tri" viewBox="0 0 40 40"><path d="M20 5l16 29H4z" fill="none" stroke="#222" stroke-width="2.500"/></symbol>
<symbol id="tbl" viewBox="0 0 40 40"><rect x="3" y="2" width="34" height="6" fill="#5a3ad8"/><path d="M3 8h30v24H3zM3 13h30M3 19h30M3 25h30M10 8v24M17 8v24M24 8v24" fill="#fff" stroke="#999"/><path d="M30 22l8 15H22z" fill="none" stroke="#e01818" stroke-width="2.500"/></symbol>
<symbol id="foldp" viewBox="0 0 40 40"><path d="M3 4h12l4 3h16l-6 27H3z" fill="#f4dc8a" stroke="#d8b850"/><path d="M24 7v12M18 13h12M14 20v12M8 26h12M30 24v12M24 30h12" stroke="#111" stroke-width="1.500"/><circle cx="24" cy="13" r="2" fill="#e01818"/><circle cx="14" cy="26" r="2" fill="#e01818"/><circle cx="30" cy="30" r="2" fill="#e01818"/></symbol>
<symbol id="foldo" viewBox="0 0 40 40"><path d="M3 4h12l4 3h16l-6 27H3z" fill="#f4dc8a" stroke="#d8b850"/><g fill="none" stroke="#333" stroke-width="2"><circle cx="24" cy="14" r="6"/><circle cx="14" cy="28" r="6"/><circle cx="30" cy="31" r="6"/></g></symbol>
<symbol id="sheet" viewBox="0 0 40 40"><rect x="4" y="2" width="32" height="36" fill="#fff" stroke="#111" stroke-width="2.500"/><path d="M9 22h16M9 26h20M9 30h12M9 34h8" stroke="#222" stroke-width="1.500"/></symbol>
<symbol id="brush" viewBox="0 0 40 40"><path d="M26 2l6 4-6 10-5-3z" fill="#6a7ad8"/><path d="M21 11l6 5-8 10-13-3z" fill="#e8d060" stroke="#887"/><path d="M3 28v12M37 28v12M3 34h34" stroke="#c01818" stroke-width="2"/><path d="M3 34l7-3v6zM37 34l-7-3v6z" fill="#c01818"/></symbol>
<symbol id="lock1" viewBox="0 0 40 40"><path d="M8 6l8-4 8 4v14H8z" fill="#ffcc30" stroke="#c89010"/><path d="M22 20l8-4 8 4v12l-8 4-8-4z" fill="#ffd84a" stroke="#c89010"/><rect x="3" y="24" width="17" height="13" fill="#d8c020" stroke="#666"/><path d="M7 24v-4q4-6 9 0v4" fill="none" stroke="#666" stroke-width="2"/></symbol>
<symbol id="lock2" viewBox="0 0 40 40"><path d="M14 6l8-4 8 4v14H14z" fill="#ffcc30" stroke="#c89010"/><path d="M26 20l6-4 6 4v12l-6 4-6-4z" fill="#ffd84a" stroke="#c89010"/><rect x="2" y="26" width="13" height="10" fill="#d8c020" stroke="#666"/><rect x="15" y="24" width="13" height="12" fill="#d8c020" stroke="#666"/><path d="M18 24v-4q4-5 7 0v4" fill="none" stroke="#666" stroke-width="2"/></symbol>
<symbol id="pmi" viewBox="0 0 40 40"><path d="M6 2h4v3h6V2h4v14h-14z" fill="#5a6ad8" stroke="#334"/><path d="M10 16h6l-3 10z" fill="#b020b0"/><path d="M6 24l8 14L34 10" fill="none" stroke="#10b030" stroke-width="5"/></symbol>
<symbol id="ptree" viewBox="0 0 40 40"><rect x="2" y="8" width="8" height="8" fill="#f4e060" stroke="#778"/><path d="M6 16v16h6M6 24h6" stroke="#556" fill="none"/><rect x="12" y="20" width="6" height="6" fill="#f4e060" stroke="#778"/><rect x="12" y="30" width="6" height="6" fill="#f4e060" stroke="#778"/><rect x="20" y="14" width="18" height="24" fill="#eef" stroke="#667"/><path d="M22 20h14M22 26h14M22 32h14" stroke="#889"/><path d="M14 2h4v3h6V2h4v10H14z" fill="#5a6ad8"/><path d="M18 12h6l-3 8z" fill="#b020b0"/></symbol>
<symbol id="pgrid" viewBox="0 0 40 40"><path d="M3 3h34v34H3zM3 10h34M3 16h34M3 22h34M14 3v34M26 3v34" fill="#fff" stroke="#555"/><rect x="3" y="30" width="34" height="7" fill="#f0d840"/><rect x="21" y="16" width="16" height="10" fill="#5a6ad8"/><path d="M26 26h6l-3 9z" fill="#b020b0"/></symbol>
<symbol id="csy2" viewBox="0 0 40 40"><path d="M7 6v22l12 8" fill="none" stroke="#333" stroke-width="2"/><path d="M7 28l12-10 0 18z" fill="#dff0e4" stroke="#333"/><path d="M7 14l12-8v14L7 28z" fill="#f2f8f2" stroke="#333"/><path d="M19 20l14-7" stroke="#1a9a3a" stroke-width="2"/><path d="M37 12l-8-1 3 6z" fill="#1a9a3a"/><path d="M7 6l-3 6h6z" fill="#1818c8"/><path d="M22 34l8 4" stroke="#d81818" stroke-width="2"/><path d="M34 39l-7-5-1 5z" fill="#d81818"/></symbol>
<symbol id="diml" viewBox="0 0 40 40"><path d="M12 2h14M9 38h22M4 16v16M34 6v26" stroke="#d81818" stroke-width="1.800"/><path d="M19 6h11v28H8V20h11z" fill="#fff" stroke="#111" stroke-width="2.600"/></symbol>
<symbol id="dia1" viewBox="0 0 40 40"><circle cx="19" cy="22" r="14" fill="none" stroke="#333" stroke-width="2"/><path d="M9 32L37 3" stroke="#c01818" stroke-width="1.600"/><path d="M8 33l3-7 4 4zM30 12l-3 7-4-4z" fill="#c01818"/></symbol>
<symbol id="dia2" viewBox="0 0 40 40"><circle cx="20" cy="20" r="14" fill="none" stroke="#333" stroke-width="2"/><path d="M1 39L39 1" stroke="#c01818" stroke-width="1.600"/><path d="M10 30l-6 2 4 4zM30 10l6-2-4-4z" fill="#c01818"/></symbol>
<symbol id="teal" viewBox="0 0 40 40"><path d="M30 5h4q2 18-10 20h-8v7L4 22l12-9v6h6q6 0 8-14z" fill="#2ea8b8"/></symbol>
<symbol id="filt" viewBox="0 0 40 40"><path d="M12 4h12q4 8 0 14l4 16H8l4-16q-4-6 0-14z" fill="#b7ac9a" stroke="#aaa"/><circle cx="18" cy="12" r="4" fill="#d8c8a8"/></symbol>
<symbol id="wr" viewBox="0 0 40 40"><path d="M6 4l6 6 8-8 6 2-4 10-4 6v16h-6V20L6 14z" fill="#9aa09a"/></symbol>
<symbol id="sfr" viewBox="0 0 40 40"><rect x="6" y="6" width="28" height="30" fill="#e8e8e8" stroke="#d01818" stroke-width="2"/><path d="M12 14h16l-6 10v8h-4v-8z" fill="#f0c030" stroke="#a87"/><path d="M20 6v14M10 14h20" stroke="#d01818"/></symbol>
<symbol id="curv" viewBox="0 0 40 40"><path d="M10 14q8-12 14 0" fill="none" stroke="#222" stroke-width="2"/><path d="M20 16l2 6 2-6zM20 20v18M12 28h16" stroke="#d01818" stroke-width="2" fill="#d01818"/></symbol>
<symbol id="frag" viewBox="0 0 40 40"><path d="M6 4h14l6 14v20h-6V20z" fill="#888"/><rect x="24" y="20" width="8" height="8" fill="#e8d040"/><rect x="24" y="29" width="8" height="8" fill="#9a8cd8"/></symbol>
<symbol id="dots" viewBox="0 0 40 40"><path d="M7 7h26v26H7z" fill="none" stroke="#333" stroke-width="2.500" stroke-dasharray="4 3"/><circle cx="33" cy="33" r="2.500" fill="#d01818"/></symbol>
<symbol id="boxv" viewBox="0 0 40 40"><path d="M4 14L18 6l18 8-4 16-14 6L8 30z" fill="#e0e0e8" stroke="#334"/><path d="M16 12l10 6" stroke="#d85050" stroke-width="3"/></symbol>
<symbol id="boxb" viewBox="0 0 40 40"><path d="M4 10L20 2l16 8v20l-16 8-16-8z" fill="#5a8ee0"/><path d="M4 10l16 8 16-8-16-8z" fill="#c8e0ff"/><path d="M20 18v20" stroke="#2a4ac0"/></symbol>
<symbol id="snap1" viewBox="0 0 40 40"><g fill="#222"><path d="M20 6l7 7-7 7-7-7zM20 20l7 7-7 7-7-7zM8 13l6 6-6 6-6-6zM32 13l6 6-6 6-6-6z"/></g><path d="M4 6l6 5-6 5z" fill="#18a838"/><path d="M4 26l6 5-6 5z" fill="#d83030"/><circle cx="20" cy="20" r="2.500" fill="#e01818"/></symbol>
<symbol id="snap2" viewBox="0 0 40 40"><g fill="#222"><path d="M12 8l6 6-6 6-6-6zM26 8l6 6-6 6-6-6zM12 20l6 6-6 6-6-6z"/></g><path d="M18 26a10 10 0 1 0 14 2l2-4-10 2z" fill="#2ea8b8"/></symbol>
<symbol id="sl1" viewBox="0 0 40 40"><path d="M8 32L32 8" stroke="#222" stroke-width="1.800"/><circle cx="31" cy="9" r="3" fill="#e01818"/></symbol>
<symbol id="sl2" viewBox="0 0 40 40"><path d="M8 32L32 8" stroke="#222" stroke-width="1.800"/><circle cx="20" cy="20" r="3" fill="#e01818"/></symbol>
<symbol id="sl3" viewBox="0 0 40 40"><path d="M12 6q-2 8 4 12 6 4 4 14 0 2 6 2" fill="none" stroke="#222" stroke-width="1.800"/><circle cx="15" cy="18" r="2.500" fill="#e01818"/></symbol>
<symbol id="sl4" viewBox="0 0 40 40"><path d="M20 10v24M6 30q2-14 14-18 12 4 14 18" fill="none" stroke="#222" stroke-width="1.800"/><circle cx="20" cy="12" r="2" fill="#e01818"/></symbol>
<symbol id="sl5" viewBox="0 0 40 40"><circle cx="20" cy="20" r="14" fill="none" stroke="#222" stroke-width="1.800"/><circle cx="20" cy="20" r="3" fill="#e01818"/></symbol>
<symbol id="sl6" viewBox="0 0 40 40"><circle cx="20" cy="20" r="13" fill="none" stroke="#222" stroke-width="1.800"/><circle cx="20" cy="7" r="2.500" fill="#e01818"/><circle cx="20" cy="33" r="2.500" fill="#e01818"/><circle cx="7" cy="20" r="2.500" fill="#e01818"/><circle cx="33" cy="20" r="2.500" fill="#e01818"/></symbol>
<symbol id="sl7" viewBox="0 0 40 40"><path d="M20 6v28M6 20h28" stroke="#222" stroke-width="1.800"/><circle cx="20" cy="20" r="2.500" fill="#e01818"/></symbol>
<symbol id="sl8" viewBox="0 0 40 40"><path d="M8 32L32 8" stroke="#222" stroke-width="1.800"/><circle cx="11" cy="29" r="3.500" fill="#e01818"/></symbol>
<symbol id="sl9" viewBox="0 0 40 40"><path d="M8 6l20 2 6 20-10 8q-8-8-14-12z" fill="#a8d8f8" stroke="#6a9ac0"/><circle cx="22" cy="16" r="2.500" fill="#e01818"/></symbol>
<symbol id="gridb" viewBox="0 0 40 40"><path d="M10 6l20 6v24l-20-6zM10 14l20 6M10 22l20 6M17 8v24M23 10v24" fill="#c8c8d0" stroke="#222" stroke-width="1.800"/></symbol>
<symbol id="skg" viewBox="0 0 40 40"><path d="M6 8l20-4v32L6 34z" fill="#a8a8a0"/><path d="M10 14h6v6h-6zM18 22h6v6h-6z" fill="none" stroke="#888" stroke-width="2"/><path d="M26 4l3 6 7-1-4 6 4 6-8-2" fill="#c8c0a0"/></symbol>
<symbol id="flag" viewBox="0 0 40 40"><rect width="40" height="40" fill="#57b6ee"/><path d="M6 12L34 4l-2 20L8 32z" fill="#fff" stroke="#111"/><path d="M10 11l6-2 1 6-6 2zM22 8l6-2 1 6-6 2zM17 15l6-2 1 6-6 2zM12 23l6-2 1 5-6 2zM24 19l6-2 1 5-6 2z" fill="#111"/><path d="M8 32l-1 7" stroke="#111" stroke-width="2"/></symbol>
<symbol id="prof" viewBox="0 0 40 40"><path d="M6 8v20q0 8 6 8t6-14q0-6 6-6t4 12q2 6 8 2" fill="none" stroke="#222" stroke-width="2"/><circle cx="6" cy="18" r="2.500" fill="#e01818"/><circle cx="18" cy="22" r="2.500" fill="#e01818"/><circle cx="30" cy="22" r="2.500" fill="#e01818"/></symbol>
<symbol id="skl" viewBox="0 0 40 40"><path d="M8 34L32 6" stroke="#222" stroke-width="2"/><circle cx="8" cy="34" r="3" fill="#e01818"/><circle cx="32" cy="6" r="3" fill="#e01818"/></symbol>
<symbol id="ska" viewBox="0 0 40 40"><path d="M8 8q18-2 24 26" fill="none" stroke="#222" stroke-width="2"/><circle cx="8" cy="8" r="3" fill="#e01818"/><circle cx="32" cy="34" r="3" fill="#e01818"/></symbol>
<symbol id="skc" viewBox="0 0 40 40"><circle cx="20" cy="20" r="15" fill="none" stroke="#222" stroke-width="2"/></symbol>
<symbol id="skf" viewBox="0 0 40 40"><path d="M5 6h16q12 0 12 14v16" fill="none" stroke="#d84848" stroke-width="1.600"/><path d="M22 6h11v10M33 6v28" fill="none" stroke="#222"/></symbol>
<symbol id="skh" viewBox="0 0 40 40"><path d="M5 6h14L33 22v14" fill="none" stroke="#d82828" stroke-width="2"/><path d="M19 6h14v16" fill="none" stroke="#222"/></symbol>
<symbol id="skr" viewBox="0 0 40 40"><rect x="6" y="10" width="28" height="22" fill="none" stroke="#222" stroke-width="2"/><circle cx="6" cy="10" r="3" fill="#e01818"/><circle cx="34" cy="32" r="3" fill="#e01818"/></symbol>
<symbol id="skp" viewBox="0 0 40 40"><path d="M6 22L18 6l6 16 12-8M24 22l-3 14" fill="none" stroke="#666" stroke-width="2"/><circle cx="18" cy="6" r="2.500" fill="#888"/><circle cx="6" cy="22" r="2.500" fill="#e01818"/><circle cx="36" cy="14" r="2.500" fill="#e01818"/><circle cx="21" cy="36" r="2.500" fill="#888"/></symbol>
<symbol id="skx" viewBox="0 0 40 40"><path d="M20 6v28M6 20h28" stroke="#222" stroke-width="2"/></symbol>
<symbol id="sko" viewBox="0 0 40 40"><path d="M7 6h14q10 2 12 12 0 10-6 12l-1 6H7z" fill="none" stroke="#555" stroke-width="2"/><path d="M11 12h9q8 2 8 7t-4 8H11z" fill="none" stroke="#d82828" stroke-width="2"/></symbol>
<symbol id="skt" viewBox="0 0 40 40"><path d="M8 4l12 32" stroke="#222" stroke-width="1.500"/><path d="M4 28h26" stroke="#444" stroke-width="2"/><path d="M14 24L28 6l4 3-14 18z" fill="#f0a020" stroke="#b06010"/></symbol>
<symbol id="skt2" viewBox="0 0 40 40"><path d="M8 4l14 32" stroke="#222" stroke-width="1.500"/><path d="M2 28h14" stroke="#d82828" stroke-width="2.500"/><path d="M18 26L30 6l4 3-12 18z" fill="#f0c020" stroke="#b06010"/></symbol>
<symbol id="skt3" viewBox="0 0 40 40"><path d="M22 4v32" stroke="#222" stroke-width="1.500"/><path d="M4 24h32" stroke="#aaa" stroke-width="3"/><path d="M14 32L30 8" stroke="#e02828" stroke-width="1.800"/></symbol>
<symbol id="skd" viewBox="0 0 40 40"><path d="M22 2l-8 14h6l-4 10 10-14h-6l6-10z" fill="#e8d020" stroke="#554"/><path d="M2 16v18M38 16v18M2 26h36" stroke="#333" stroke-width="1.500"/><path d="M2 26l6-3v6zM38 26l-6-3v6z" fill="#333"/></symbol>
<symbol id="skn1" viewBox="0 0 40 40"><path d="M6 26L24 6M14 28L30 8" stroke="#8a2a8a" stroke-width="2.200"/><path d="M8 34h24M20 34V24" stroke="#8a2a8a" stroke-width="2"/></symbol>
<symbol id="skn2" viewBox="0 0 40 40"><rect x="6" y="6" width="28" height="30" fill="none" stroke="#1414a8" stroke-width="2"/><path d="M16 4l4 8 4-8zM16 38l4-8 4 8z" fill="#a818a8"/><path d="M20 6v30" stroke="#a818a8" stroke-dasharray="3 2"/></symbol>
<symbol id="skn3" viewBox="0 0 40 40"><path d="M3 14l8 7-8 7z" fill="#18a838"/><path d="M14 26L28 4M22 28L36 6" stroke="#8a2a8a" stroke-width="2.200"/><path d="M14 36h20M24 36V24" stroke="#8a2a8a" stroke-width="2"/></symbol>
<symbol id="skw" viewBox="0 0 40 40"><rect x="3" y="3" width="18" height="18" fill="#fff" stroke="#111" stroke-width="2"/><rect x="22" y="22" width="15" height="15" fill="#fff" stroke="#111" stroke-width="2"/><rect x="3" y="27" width="8" height="10" fill="#333"/><path d="M14 30L34 6l3 3-18 24z" fill="#f0c020" stroke="#664"/></symbol>
<symbol id="sky" viewBox="0 0 40 40"><path d="M6 14q4-10 14-8" fill="none" stroke="#1a3ab8" stroke-width="3"/><path d="M6 22l18-6 12 6-18 8z" fill="#a8c8f0" stroke="#2a4ac8"/><path d="M6 22v12l12 5v-9z" fill="#5a8ee0"/><path d="M18 30v9l10-4v-8z" fill="#2a5ac0"/><rect x="24" y="26" width="12" height="11" fill="#888" stroke="#333"/><path d="M16 22L34 2l4 3-18 20z" fill="#f0c020" stroke="#664"/></symbol>
<symbol id="skz" viewBox="0 0 40 40"><path d="M6 14q4-10 14-8" fill="none" stroke="#1a3ab8" stroke-width="3"/><path d="M6 24l16-6 12 6-16 8z" fill="#b8d0f0" stroke="#2a4ac8"/><path d="M6 24v10l12 5v-7z" fill="#5a8ee0"/><path d="M18 32v7l16-7v-8z" fill="#3a6ad0"/><rect x="20" y="6" width="6" height="14" fill="#7aa0e0"/></symbol>
<symbol id="tv" viewBox="0 0 24 24"><path d="M12 2L2 7v9l10 5 10-5V7zM2 7l10 5 10-5M12 12v9M7 4.500v12M17 4.500v12" fill="#d8f4e0" stroke="#1c9a66" stroke-width="1.400"/><path d="M12 22l10-5" stroke="#e01818" stroke-width="2.400"/></symbol>
<symbol id="tcheck" viewBox="0 0 24 24"><path d="M2 12l6 8L22 4" fill="none" stroke="#10b030" stroke-width="5"/></symbol>
<symbol id="tcam" viewBox="0 0 24 24"><path d="M2 8l16-5 3 14-16 4z" fill="#f4e4e8" stroke="#e05050"/><path d="M8 10l5-3 5 3v6l-5 3-5-3z" fill="#a8c0f0" stroke="#5a7ad0"/><path d="M20 11l4 3-4 3z" fill="#c818a8"/></symbol>
<symbol id="tfold" viewBox="0 0 24 24"><path d="M2 6h7l2 2h9v3H7L3 22H2z" fill="#e8c050" stroke="#8a6a10"/><path d="M7 11h16l-4 11H3z" fill="#ffe070" stroke="#8a6a10"/></symbol>
<symbol id="tchk" viewBox="0 0 18 18"><rect x="1" y="1" width="16" height="16" fill="#fff" stroke="#111" stroke-width="2"/><path d="M3.500 9l4 5 7-10" fill="none" stroke="#109a30" stroke-width="3"/></symbol>
<symbol id="tcs" viewBox="0 0 24 24"><path d="M4 3v14l10 4M4 17l8-6 0 10M4 8l8-5v8" fill="#eef" stroke="#333" stroke-width="1.300"/><path d="M12 11l9-3" stroke="#1a9a3a" stroke-width="1.500"/><path d="M14 20l6 3" stroke="#d81818" stroke-width="1.500"/><path d="M4 0L2 4h4z" fill="#1818c8"/></symbol>
<symbol id="tsk1" viewBox="0 0 24 24"><rect width="24" height="24" fill="#1890e8"/><path d="M0 0h24v24H0z" fill="none" stroke="#fff" stroke-dasharray="3 2" stroke-width="2"/><rect x="4" y="4" width="7" height="7" fill="#fff" stroke="#111" stroke-width="1.400"/><rect x="12" y="13" width="8" height="7" fill="#fff" stroke="#111" stroke-width="1.400"/><rect x="3" y="14" width="7" height="6" fill="#fff" stroke="#111" stroke-width="1.400"/><path d="M10 14l8-10 2 2-7 10z" fill="#f4c020"/></symbol>
<symbol id="tsk2" viewBox="0 0 24 24"><rect x="1" y="1" width="9" height="9" fill="#fff" stroke="#333" stroke-width="1.400"/><rect x="1" y="14" width="9" height="9" fill="#fff" stroke="#333" stroke-width="1.400"/><rect x="14" y="14" width="9" height="9" fill="#fff" stroke="#333" stroke-width="1.400"/><path d="M9 15L20 2l3 2-11 13z" fill="#f0c020" stroke="#a04020"/></symbol>
<symbol id="tsw" viewBox="0 0 24 24"><path d="M2 12l8-9 12 9-9 10z" fill="#cfcfcf" stroke="#e05020" stroke-width="1.800"/><path d="M7 9l8 9M11 6l7 9M6 14l9-7M10 18l8-8" stroke="#999"/></symbol>
<symbol id="tex" viewBox="0 0 24 24"><path d="M2 5l10-3 10 3v14l-2 2H4l-2-2z" fill="#f0a030" stroke="#a85a10"/><path d="M8 4v16M16 4v16M2 5l10 3 10-3" fill="none" stroke="#8a4a10"/><path d="M2 20h20" stroke="#2a4ac8" stroke-width="2"/></symbol>
<symbol id="tbl2" viewBox="0 0 24 24"><path d="M2 6l10-4 10 4v12l-10 4-10-4z" fill="#5a8ee0" stroke="#2a4ab8"/><path d="M2 6l10-4 10 4-10 4z" fill="#e8f0ff"/><path d="M4 10l14 0v6H4z" fill="#f0c878" stroke="#c05020"/></symbol>
<symbol id="tsh" viewBox="0 0 24 24"><path d="M12 2l10 4v14l-8 3z" fill="#3a6ad0"/><path d="M1 8l13-3v18L1 19z" fill="#e8e8f0" stroke="#2a4ab8"/><path d="M6 10l8-2v10l-8-1z" fill="#e87028"/></symbol>
<symbol id="rt1" viewBox="0 0 36 38"><path d="M5 3l6-3 6 3v7l-6 3-6-3zM11 11l6-3 6 3v7l-6 3-6-3z" fill="#f4c020" stroke="#c88810"/><path d="M24 14h12M6 18v14h8M6 25h8" stroke="#1818a8" stroke-width="1.600" fill="none"/><path d="M17 26l6-3 6 3v7l-6 3-6-3z" fill="#f4c020" stroke="#c88810"/></symbol>
<symbol id="rt2" viewBox="0 0 36 38"><path d="M2 4q7-3 14 0v10q-7 3-14 0z" fill="#e6a8d8" stroke="#8a1a6a" stroke-width="1.800"/><path d="M22 12h12M6 18v16h8M6 26h8" stroke="#1818a8" stroke-width="1.800" fill="none"/><circle cx="24" cy="28" r="7" fill="#f4d8ee" stroke="#8a1a6a" stroke-width="1.600"/><circle cx="24" cy="28" r="3" fill="none" stroke="#8a1a6a"/></symbol>
<symbol id="rt3" viewBox="0 0 36 38"><path d="M1 10l6-4 6 4v24H1z" fill="#f08a20" stroke="#a85a10"/><path d="M12 10l6-4 6 4v24H12z" fill="#30b040" stroke="#1a7a2a"/><path d="M23 10l6-4 6 2v22l-6 4h-6z" fill="#3a8ad8" stroke="#1a5aa8"/><path d="M7 6l6-4M18 6l6-4" stroke="#c83a2a" stroke-width="2"/></symbol>
<symbol id="rt5" viewBox="0 0 36 38"><path d="M5 3h19l9 9v24H5z" fill="#fff" stroke="#2a5ac8" stroke-width="1.800"/><circle cx="19" cy="24" r="9" fill="#30a060"/><path d="M12 22q7-6 14 0-7 8-14 0z" fill="#6ab8e8"/></symbol>
<symbol id="rt6" viewBox="0 0 36 38"><circle cx="18" cy="19" r="16" fill="#f0f4ff" stroke="#667" stroke-width="2"/><path d="M18 7v12h9" stroke="#111" stroke-width="2.400" fill="none"/><g stroke="#445" stroke-width="1.500"><path d="M18 4v2M18 32v2M3 19h2M31 19h2"/></g></symbol>
<symbol id="pnav" viewBox="0 0 20 20"><path d="M2 18l3-5" stroke="#111" stroke-width="2"/><path d="M5 7q6-6 12-3 2 6-4 10-6 2-8-7z" fill="#d8e820" stroke="#111" stroke-width="1.600"/><circle cx="13" cy="8" r="3" fill="#e8f8a0" stroke="#111"/></symbol>
<symbol id="chevd" viewBox="0 0 20 14"><path d="M2 2l8 9 8-9" fill="none" stroke="#555" stroke-width="3.500"/></symbol>
<symbol id="gch" viewBox="0 0 13 13"><path d="M2 9l4.500-5 4.500 5" fill="none" stroke="#555" stroke-width="2"/></symbol>
<symbol id="gcd" viewBox="0 0 13 13"><path d="M2 4l4.500 5 4.500-5" fill="none" stroke="#555" stroke-width="2"/></symbol>
<symbol id="gcl" viewBox="0 0 13 13"><path d="M9 2L4 6.500 9 11" fill="none" stroke="#555" stroke-width="2"/></symbol>
<symbol id="gcr" viewBox="0 0 13 13"><path d="M4 2l5 4.500L4 11" fill="none" stroke="#555" stroke-width="2"/></symbol>
<symbol id="lred" viewBox="0 0 40 40"><rect x="3" y="3" width="34" height="34" rx="5" fill="#f05a72" transform="rotate(-15 20 20)"/><path d="M15 11l2 17 12-3" fill="none" stroke="#fff" stroke-width="4"/></symbol>
</svg>

<!-- window title -->
<div class="titlebar d-flex align-items-center">
  <svg class="logo"><use href="#nx"/></svg>
  <span>李珩专用 - 建模 - <b>[model12.prt</b> （修改的） <b>]</b></span>
</div>
<div class="siemens">SIEMENS</div>
<div class="winbtn w-min"><svg width="14" height="14"><rect x="3" y="9" width="8" height="3" fill="#fff"/></svg></div>
<div class="winbtn w-max"><svg width="16" height="16" fill="none" stroke="#fff" stroke-width="1.400"><rect x="2" y="5" width="8" height="9"/><path d="M5 5V2h9v9h-4"/></svg></div>
<div class="winbtn w-close"><svg width="16" height="18" stroke="#fff" stroke-width="2.600"><path d="M2 2l12 14M14 2L2 16"/></svg></div>

<div class="menubar d-flex align-items-center">
  <svg class="menulogo" viewBox="0 0 30 34"><path d="M8 4l6-3 3 6 5 6 3 7-4 9-10 3-5-5V13z" fill="#2a74d8"/><path d="M11 14l8 8-4 5-5-4z" fill="#dcecff"/></svg>
  <span>文件<em>(F)</em></span><span>编辑<em>(E)</em></span><span>视图<em>(V)</em></span><span>插入<em>(S)</em></span><span>格式<em>(R)</em></span><span>工具<em>(T)</em></span><span>装配<em>(A)</em></span><span>信息<em>(I)</em></span><span>分析<em>(L)</em></span><span>首选项<em>(P)</em></span><span>窗口<em>(O)</em></span><span>GC 工具箱</span><span>帮助<em>(H)</em></span>
</div>
<div class="mdibtn m1"><svg width="12" height="12"><rect x="2" y="8" width="8" height="2" fill="#444"/></svg></div>
<div class="mdibtn m2"><svg width="14" height="14" fill="none" stroke="#555"><rect x="2" y="5" width="7" height="7"/><path d="M5 5V2h7v7H9"/></svg></div>
<div class="mdibtn m3"><svg width="12" height="14" stroke="#ccc" stroke-width="2"><path d="M1 1l10 12M11 1L1 13"/></svg></div>

<div class="tb-area">
  <!-- row 1 -->
  <div class="tb-row d-flex">
    <div class="tb-grp d-flex align-items-center pr5"><span class="grip grip-a"></span><svg class="ico ico-nx"><use href="#nx"/></svg><span class="start-txt">开始</span><span class="dd n"></span><svg class="ico"><use href="#new"/></svg><svg class="ico"><use href="#save"/></svg></div>
    <div class="tb-grp d-flex align-items-center pl4 pr7"><svg class="ico"><use href="#cut"/></svg><svg class="ico"><use href="#copy"/></svg><svg class="ico"><use href="#paste"/></svg></div>
    <div class="tb-grp d-flex align-items-center pl3 pr7"><svg class="ico"><use href="#undo"/></svg><svg class="ico"><use href="#redo"/></svg></div>
    <div class="tb-grp d-flex align-items-center pl4 pr4"><svg class="ico"><use href="#binoc"/></svg><span class="me-1">命令查找器</span><svg class="ico ms-1"><use href="#refresh"/></svg><span class="dd"></span></div>
    <div class="tb-grp d-flex align-items-center pl2 pr6"><svg class="ico" viewBox="0 0 40 40"><rect x="2" y="1" width="19" height="21" fill="#fff" stroke="#22227a" stroke-width="2"/><text x="11.500" y="18" text-anchor="middle" font-family="Liberation Serif" font-weight="700" font-size="19" fill="#111">i</text><path d="M24 16l11 11-11 11-10-11z" fill="#fff" stroke="#22227a" stroke-width="3"/><path d="M24 20v14l-6-7z" fill="#3a5ad0"/></svg><span class="dd lo"></span></div>
    <div class="tb-grp d-flex align-items-center pr4"><span class="grip"></span><svg class="ico"><use href="#fit"/></svg><span class="dd"></span><svg class="ico"><use href="#scan"/></svg><span class="dd"></span><svg class="ico"><use href="#cube"/></svg><span class="dd"></span><svg class="ico"><use href="#shade"/></svg><svg class="ico"><use href="#pane"/></svg><span class="dd"></span><svg class="ico"><use href="#bwin"/></svg><span class="dd"></span></div>
    <div class="tb-grp d-flex align-items-center pl4"><svg class="ico"><use href="#vis1"/></svg><svg class="ico ms-1"><use href="#vis2"/></svg><span class="dd lo"></span></div>
    <div class="tb-grp d-flex align-items-center pr4"><span class="grip grip3"></span><svg class="ico"><use href="#llist"/></svg><svg class="ico"><use href="#csys"/></svg><span class="dd"></span></div>
    <div class="tb-grp d-flex align-items-center pl4 pr7"><svg class="ico"><use href="#handd"/></svg><svg class="ico"><use href="#palette"/></svg></div>
    <div class="tb-grp d-flex align-items-center pl2 pr6"><svg class="ico"><use href="#playd"/></svg><span class="dd"></span></div>
    <div class="tb-grp d-flex align-items-center pl4 pr3"><svg class="ico"><use href="#hatch"/></svg><span class="dd"></span><svg class="ico"><use href="#ruler"/></svg><span class="dd lo"></span></div>
  </div>
  <!-- row 2 -->
  <div class="tb-row d-flex w47">
    <div class="tb-grp d-flex align-items-center pr3 dim"><span class="grip grip-a"></span><svg class="ico"><use href="#g-plane"/></svg><span class="dd n"></span><svg class="ico"><use href="#g-ext"/></svg><svg class="ico"><use href="#g-rev"/></svg><svg class="ico"><use href="#g-hole"/></svg><svg class="ico"><use href="#g-boss"/></svg><svg class="ico"><use href="#g-pock"/></svg></div>
    <div class="tb-grp d-flex align-items-center pl3 pr4 dim"><svg class="ico"><use href="#g-pad"/></svg><svg class="ico"><use href="#g-pads"/></svg><svg class="ico"><use href="#g-arr"/></svg><svg class="ico"><use href="#g-uni"/></svg><span class="dd n"></span><svg class="ico"><use href="#g-blk"/></svg><svg class="ico"><use href="#g-cut"/></svg><svg class="ico"><use href="#g-pipe"/></svg><svg class="ico"><use href="#g-sp"/></svg><svg class="ico"><use href="#g-trim"/></svg></div>
    <div class="tb-grp d-flex align-items-center pl2 pr4 dim"><svg class="ico"><use href="#g-f1"/></svg><svg class="ico"><use href="#g-f2"/></svg><svg class="ico"><use href="#g-f2"/></svg><svg class="ico"><use href="#g-f3"/></svg><svg class="ico"><use href="#g-frm"/></svg><svg class="ico"><use href="#g-gem"/></svg><span class="dd n lo"></span></div>
    <div class="tb-grp d-flex align-items-center pr4 dim"><span class="grip grip2"></span><svg class="ico"><use href="#g-c1"/></svg><span class="dd n"></span><svg class="ico"><use href="#g-c2"/></svg><span class="dd n"></span><svg class="ico"><use href="#g-c3"/></svg><span class="dd n"></span><svg class="ico"><use href="#g-c4"/></svg><span class="dd n"></span><svg class="ico"><use href="#g-c5"/></svg><span class="dd n"></span><span class="dd n lo ms-1"></span></div>
    <div class="tb-grp d-flex align-items-center pr4 dim"><span class="grip"></span><svg class="ico"><use href="#g-s1"/></svg><svg class="ico"><use href="#g-s2"/></svg><svg class="ico"><use href="#g-s3"/></svg><svg class="ico"><use href="#g-s4"/></svg><svg class="ico"><use href="#g-s5"/></svg><svg class="ico"><use href="#g-s6"/></svg><svg class="ico"><use href="#g-s7"/></svg><span class="dd n"></span><span class="dd n lo"></span></div>
  </div>
  <!-- row 3 -->
  <div class="tb-row d-flex">
    <div class="tb-grp d-flex align-items-center pr6"><span class="grip grip-a"></span><svg class="ico"><use href="#boxs"/></svg><svg class="ico"><use href="#layers"/></svg><svg class="ico"><use href="#llist"/></svg></div>
    <div class="tb-grp d-flex align-items-center pl4 pr5"><svg class="ico"><use href="#tag"/></svg></div>
    <div class="tb-grp d-flex align-items-center pl4 pr6"><svg class="ico"><use href="#as1"/></svg><svg class="ico"><use href="#as2"/></svg><svg class="ico mt-g"><use href="#as3"/></svg></div>
    <div class="tb-grp d-flex align-items-center pl2 pr4"><svg class="ico" viewBox="0 0 40 40"><path d="M4 8l10-6 10 6v12l-10 5-10-5z" fill="#ffdf7a" stroke="#c89020"/><path d="M22 22l12-14 4 3-12 14z" fill="#e8a028" stroke="#554"/><rect x="1" y="24" width="25" height="13" fill="#fff" stroke="#4a2a9a" stroke-width="2"/><text x="13.500" y="34" text-anchor="middle" font-family="Liberation Sans" font-size="8.500" font-weight="700" fill="#111">ABC</text><path d="M29 23l9 8-9 8z" fill="#b0189a"/></svg><span class="dd lo"></span></div>
    <div class="tb-grp d-flex align-items-center pr5"><span class="grip"></span><svg class="ico"><use href="#wave1"/></svg><svg class="ico mt-g"><use href="#wave2"/></svg><svg class="ico mt-g"><use href="#hdim"/></svg><span class="dd n lo"></span></div>
    <div class="tb-grp d-flex align-items-center pr5"><span class="grip"></span><svg class="ico"><use href="#coil"/></svg><svg class="ico mt-g"><use href="#spring"/></svg><svg class="ico"><use href="#washer"/></svg></div>
    <div class="tb-grp d-flex align-items-center pl3 pr2"><svg class="ico"><use href="#xspr"/></svg><span class="dd lo"></span></div>
    <div class="tb-grp gap-l d-flex align-items-center pr5"><span class="grip"></span><svg class="ico"><use href="#tri"/></svg><svg class="ico"><use href="#tbl"/></svg><svg class="ico"><use href="#foldp"/></svg><svg class="ico"><use href="#foldo"/></svg><svg class="ico"><use href="#sheet"/></svg><svg class="ico mt-g"><use href="#brush"/></svg></div>
    <div class="tb-grp d-flex align-items-center pl4 pr2"><svg class="ico" viewBox="0 0 40 40"><path d="M8 6l10-3 2 6-6 7zM32 6l-10-3-2 6 6 7z" fill="#222"/><circle cx="11" cy="11" r="5" fill="#3a60c8" stroke="#111"/><circle cx="27" cy="14" r="6" fill="#3a60c8" stroke="#111"/><text x="2" y="37" font-family="Liberation Sans" font-weight="700" font-size="15" fill="#111" textLength="16">10</text><text x="19" y="37" font-family="Liberation Sans" font-weight="700" font-size="15" fill="#a01818" textLength="19">H7</text></svg><span class="dd lo"></span></div>
    <div class="tb-grp d-flex align-items-center pr4"><span class="grip grip3"></span><svg class="ico"><use href="#lock1"/></svg><svg class="ico"><use href="#lock2"/></svg><span class="dd n lo"></span></div>
  </div>
  <!-- row 4 -->
  <div class="tb-row d-flex w47">
    <div class="tb-grp d-flex align-items-center pr5"><span class="grip grip-a"></span><svg class="ico"><use href="#pmi"/></svg><svg class="ico"><use href="#ptree"/></svg><svg class="ico"><use href="#pgrid"/></svg><svg class="ico"><use href="#csy2"/></svg><span class="dd n lo"></span></div>
    <div class="tb-grp d-flex align-items-center pr6"><span class="grip"></span><svg class="ico"><use href="#diml"/></svg></div>
    <div class="tb-grp d-flex align-items-center pl4 pr6">
      <div class="tol">1.00</div>
      <div class="tol">1.00<small>±.05</small></div>
      <div class="tol">1.00<small>+.05</small><small>−.02</small></div>
      <div class="tol">1.00<small>+.05</small><small class="off">−.00</small></div>
      <div class="tol">1.00<small class="off">+.00</small><small>−.02</small></div>
      <div class="tol box"><span>1.00</span></div>
      <div class="tol par"><span><i>(</i>1.00<i>)</i></span></div>
      <div class="tol blue">10H7</div>
      <div class="tol blue">10H7<small>(10.01</small><small>10)</small></div>
      <div class="tol blue">10H7<small>(0.015</small><small>0)</small></div>
      <div class="tol blue">10<small>(0.015</small><small>0)</small></div>
    </div>
    <div class="tb-grp d-flex align-items-center pl3 pr4">
      <svg class="ico" viewBox="0 0 40 40"><text x="12" y="15" font-family="Liberation Sans" font-size="12" fill="#c01818" textLength="24">R(Ø)</text><path d="M11 18h26M11 18L3 28" stroke="#c01818" stroke-width="1.500" fill="none"/><path d="M1 32l3-8 5 4z" fill="#c01818"/></svg>
      <svg class="ico" viewBox="0 0 40 40"><text transform="rotate(-50 12 24)" x="11" y="24" font-family="Liberation Sans" font-size="11" fill="#c01818" textLength="23">R(Ø)</text><path d="M3 36L37 4" stroke="#c01818" stroke-width="1.500"/><path d="M1 38l3-8 5 5z" fill="#c01818"/></svg>
    </div>
    <div class="tb-grp d-flex align-items-center pl3 pr3"><svg class="ico"><use href="#dia1"/></svg><svg class="ico"><use href="#dia2"/></svg><svg class="ico"><use href="#teal"/></svg><span class="dd n lo"></span></div>
  </div>
</div>

<!-- selection bar -->
<div class="selbar d-flex align-items-center">
  <div class="sel sel1 d-flex align-items-center">没有选择过滤器<span class="selarrow"></span></div>
  <div class="sel sel2 d-flex align-items-center">整个装配<span class="selarrow"></span></div>
  <div class="tb-grp d-flex align-items-center pr4 dim"><svg class="ico"><use href="#filt"/></svg></div>
  <div class="tb-grp d-flex align-items-center pl5 pr4"><svg class="ico"><use href="#wr"/></svg><svg class="ico"><use href="#sfr"/></svg><span class="dd n"></span><svg class="ico"><use href="#curv"/></svg><svg class="ico"><use href="#frag"/></svg></div>
  <div class="tb-grp d-flex align-items-center pl4 pr7"><svg class="ico"><use href="#dots"/></svg><span class="dd n"></span></div>
  <div class="tb-grp d-flex align-items-center pl4 pr3"><svg class="ico"><use href="#boxv"/></svg><svg class="ico"><use href="#boxb"/></svg></div>
  <div class="tb-grp d-flex align-items-center pl4 pr5"><svg class="ico boxed"><use href="#snap1"/></svg><svg class="ico"><use href="#snap2"/></svg><svg class="ico boxed"><use href="#sl1"/></svg><svg class="ico boxed"><use href="#sl2"/></svg><svg class="ico"><use href="#sl3"/></svg><svg class="ico"><use href="#sl4"/></svg><svg class="ico boxed"><use href="#sl5"/></svg><svg class="ico"><use href="#sl6"/></svg><svg class="ico boxed"><use href="#sl7"/></svg><svg class="ico boxed"><use href="#sl8"/></svg><svg class="ico"><use href="#sl9"/></svg></div>
  <svg class="ico ms-1"><use href="#gridb"/></svg>
  <span class="dd n ms-auto lo"></span>
</div>
<div class="statbar d-flex align-items-center">
  <div class="st-a"></div><div class="st-b"></div><div class="st-c"></div>
  <svg class="staticon on"><use href="#flag"/></svg>
  <svg class="staticon" viewBox="0 0 28 26"><path d="M6 2h-4v4M22 2h4v4M2 20v4h4M26 20v4h-4" fill="none" stroke="#555" stroke-width="2"/><rect x="8" y="6" width="12" height="15" fill="#9fc4ee" stroke="#334"/></svg>
</div>

<!-- main -->
<div class="mainarea d-flex">
  <div class="rail">
    <div class="rtab t1"><svg><use href="#rt1"/></svg></div>
    <div class="rtab on"><svg><use href="#rt2"/></svg></div>
    <div class="rtab t3"><svg><use href="#rt3"/></svg></div>
    <div class="rtab"><svg viewBox="0 0 36 38"><g fill="none" stroke="#3a6ad0" stroke-width="4"><path d="M20 6q12 2 15 14"/><path d="M18 0q16 2 20 20"/></g><circle cx="14" cy="24" r="13" fill="#1a78d8" stroke="#0a4aa8"/><text x="14" y="31" text-anchor="middle" font-family="Liberation Serif" font-weight="700" font-size="20" fill="#fff">i</text></svg></div>
    <div class="rtab"><svg><use href="#rt5"/></svg></div>
    <div class="rtab"><svg><use href="#rt6"/></svg></div>
    <div class="rtab torn"></div>
    <div class="navb"><svg viewBox="0 0 15 13"><path d="M2 2h11M7.500 4L2 12h11z" stroke="#bbb" fill="#c8c8c8"/></svg></div>
    <div class="navb"><svg viewBox="0 0 15 13"><path d="M7.500 3L1 11h13z" fill="#c8c8c8"/></svg></div>
    <div class="navb"><svg viewBox="0 0 15 13"><path d="M7.500 10L1 2h13z" fill="#444"/></svg></div>
    <div class="navb"><svg viewBox="0 0 15 13"><path d="M7.500 9L1 1h13zM1 11h13" fill="#444" stroke="#444"/></svg></div>
  </div>
  <div class="panel">
    <div class="p-title d-flex align-items-center"><svg><use href="#pnav"/></svg>部件导航器</div>
    <div class="treebox">
      <div class="t-head d-flex align-items-center"><div class="t-col1 d-flex align-items-center">名称<span class="sorttri"></span></div><div class="t-col2">附注</div></div>
      <div class="t-rows">
        <div class="t-r alt d-flex"><div class="t-name d-flex align-items-center"><span class="expander">+</span><svg class="tic me-1"><use href="#tv"/></svg>模型视图</div></div>
        <div class="t-r d-flex"><div class="t-name d-flex align-items-center"><span class="expander">+</span><svg class="tic"><use href="#tcheck"/></svg><svg class="tic me-1"><use href="#tcam"/></svg>摄像机</div></div>
        <div class="t-r alt d-flex"><div class="t-name d-flex align-items-center"><span class="expander">−</span><svg class="tic me-1"><use href="#tfold"/></svg>模型历史记录</div></div>
        <div class="t-r kid d-flex"><div class="t-name d-flex align-items-center"><svg class="cbx"><use href="#tchk"/></svg><svg class="tic me-1"><use href="#tcs"/></svg><span class="txt-red">基准坐标系<em>(0)</em></span></div></div>
        <div class="t-r kid alt d-flex"><div class="t-name d-flex align-items-center"><svg class="cbx"><use href="#tchk"/></svg><svg class="tic me-1"><use href="#tsk1"/></svg><span class="txt-gray">草图<em>(1) "SKETCH_0...</em></span></div></div>
        <div class="t-r kid d-flex"><div class="t-name d-flex align-items-center"><svg class="cbx"><use href="#tchk"/></svg><svg class="tic"><use href="#tsk2"/></svg></div><div class="t-sel d-flex"><i class="cut">草图<em>(2) "SKETCH_0...</em></i></div></div>
        <div class="t-r kid alt d-flex"><div class="t-name d-flex align-items-center"><svg class="cbx"><use href="#tchk"/></svg><svg class="tic me-1"><use href="#tsw"/></svg><span class="txt-blue">扫掠<em>(3)</em></span></div></div>
        <div class="t-r kid d-flex"><div class="t-name d-flex align-items-center"><svg class="cbx"><use href="#tchk"/></svg><svg class="tic me-1"><use href="#tex"/></svg><span class="txt-gray">拉伸<em>(4)</em></span></div></div>
        <div class="t-r kid alt d-flex"><div class="t-name d-flex align-items-center"><svg class="cbx"><use href="#tchk"/></svg><svg class="tic me-1"><use href="#tex"/></svg><span>拉伸<em>(5)</em></span></div></div>
        <div class="t-r kid d-flex"><div class="t-name d-flex align-items-center"><svg class="cbx"><use href="#tchk"/></svg><svg class="tic me-1"><use href="#tbl2"/></svg><span>边倒圆<em>(6)</em></span></div></div>
        <div class="t-r kid alt d-flex"><div class="t-name d-flex align-items-center"><svg class="cbx"><use href="#tchk"/></svg><svg class="tic me-1"><use href="#tsh"/></svg><span>壳<em>(7)</em></span></div></div>
      </div>
      <span class="t-vline"></span><span class="t-vline2"></span>
      <div class="vs"><div class="vs-thumb"></div><svg class="chev c-up"><use href="#gch"/></svg><svg class="chev c-dn"><use href="#gcd"/></svg></div>
      <div class="hs"><div class="hs-thumb"></div><svg class="chev c-l"><use href="#gcl"/></svg><svg class="chev c-r"><use href="#gcr"/></svg></div>
    </div>
    <div class="splitter"><span class="split-h"></span></div>
    <div class="acc-r d-flex align-items-center mb-1">相依性<span class="acc-sep"><svg><use href="#chevd"/></svg></span></div>
    <div class="acc-r d-flex align-items-center">细节<span class="acc-sep"><svg><use href="#chevd"/></svg></span></div>
    <div class="acc-r d-flex align-items-center">预览<span class="acc-sep"><svg><use href="#chevd"/></svg></span></div>
  </div>
  <div class="viewport">
    <svg class="scene" width="1390" height="582" viewBox="530 358 1390 582">
      <g transform="translate(880 440) scale(.472 .3333)" class="lines">
        <path d="M415 200C550 140 800 70 1090 55C1220 60 1340 100 1400 170C1450 240 1475 330 1480 400C1495 500 1515 600 1515 660C1515 780 1480 900 1445 940C1410 1000 1350 1022 1280 1022C1180 1010 1000 980 900 985C800 990 750 1030 690 1080C600 1160 480 1225 360 1225C250 1225 150 1160 110 1070C85 1000 90 950 90 900C75 830 68 780 68 700C70 560 130 410 250 280C300 240 360 215 415 200Z" fill="url(#gFillet)"/>
        <g clip-path="url(#clipBody)">
          <path d="M68 700C70 560 130 410 250 280" fill="none" stroke="#8499a0" stroke-width="45" filter="url(#blur2)"/>
          <path d="M60 830C130 960 250 1030 360 1032C480 1030 600 970 665 925C720 870 780 780 870 755C1000 740 1100 705 1150 700C1200 700 1240 710 1280 705C1340 695 1390 660 1405 630C1440 570 1470 480 1480 410" fill="none" stroke="#3c474c" stroke-width="90" filter="url(#blur1)"/>
          <ellipse cx="370" cy="700" rx="170" ry="45" fill="#dcedf3" filter="url(#blur2)"/>
          <ellipse cx="1320" cy="590" rx="60" ry="26" fill="#ecfbff" filter="url(#blur2)"/>
          <path d="M75 820C130 950 250 1020 360 1022C480 1020 600 960 665 915C720 860 780 770 870 745C1000 730 1100 695 1150 690C1200 690 1240 700 1280 695C1340 685 1390 650 1405 620C1440 560 1470 470 1480 400L1560 400V1260H40V820Z" fill="url(#gWall)"/>
        </g>
        <path d="M203 440C210 350 300 240 415 200C600 130 900 65 1100 68C1200 75 1300 90 1355 130C1400 220 1400 340 1395 390C1380 450 1360 500 1320 540C1290 555 1260 552 1240 548C1150 520 1050 470 960 430C930 420 870 418 800 420C700 430 600 450 495 525C430 575 370 605 300 603C240 590 205 520 203 440Z" fill="url(#gFace)" stroke="#333c40" stroke-width="1.300"/>
        <path d="M415 200C550 140 800 70 1090 55C1220 60 1340 100 1400 170C1450 240 1475 330 1480 400C1495 500 1515 600 1515 660C1515 780 1480 900 1445 940C1410 1000 1350 1022 1280 1022C1180 1010 1000 980 900 985C800 990 750 1030 690 1080C600 1160 480 1225 360 1225C250 1225 150 1160 110 1070C85 1000 90 950 90 900C75 830 68 780 68 700C70 560 130 410 250 280C300 240 360 215 415 200Z" fill="none" stroke="#3c4448" stroke-width="1"/>
        <g fill="none" stroke="#33393c" stroke-width="1.200">
          <path d="M75 820C130 950 250 1020 360 1022C480 1020 600 960 665 915C720 860 780 770 870 745C1000 730 1100 695 1150 690C1200 690 1240 700 1280 695C1340 685 1390 650 1405 620C1440 560 1470 470 1480 400"/>
          <path d="M495 525C560 640 640 820 665 915L685 1080"/>
          <path d="M890 420L905 800L920 980"/>
          <path d="M1255 550L1238 700L1275 1020"/>
          <path d="M1350 515C1385 550 1400 590 1405 620L1445 940"/>
          <path d="M1355 130C1370 140 1395 150 1420 190"/>
          <path d="M415 200L430 165"/>
        </g>
        <path d="M637 520L900 488L935 797L675 830Z" fill="#0a8cdc" fill-opacity=".3" stroke="#0899ff" stroke-width="3"/>
        <path d="M785 655L752 420" stroke="#2a7a2a" stroke-width="3" fill="none"/>
        <path d="M750 355L742 438H776Z" fill="#1c6a1c"/>
        <path d="M785 655L590 683" stroke="#d93434" stroke-width="3" fill="none"/>
        <path d="M530 688L592 664L596 706Z" fill="#d42c2c"/>
      </g>
      <g font-family="Liberation Sans" font-size="16">
        <text x="1226" y="557" fill="#4eae58">Y</text>
        <text x="1246" y="588" fill="#3a66e8">ZC</text>
        <text x="1229" y="608" fill="#d86a6a">X</text>
        <text x="1110" y="677" fill="#dc8a8a">X</text>
        <text x="1165" y="686" fill="#38a840">YC</text>
      </g>
      <g>
        <path d="M562 846l16-4 4 3v30l-20 0z" fill="#d4d5d5" stroke="#b0b0b0"/>
        <path d="M563 858h18M563 866h18" stroke="#bbb"/>
        <path d="M548 878L581 876" stroke="#3a9a3a" stroke-width="2"/>
        <path d="M583 843L587 871" stroke="#1a3ad8" stroke-width="3"/>
        <path d="M590 850L589 870" stroke="#d86a6a" stroke-width="2"/>
        <circle cx="588" cy="875" r="6" fill="#b4b4b4"/>
        <g font-family="Liberation Sans" font-size="17"><text x="535" y="885" fill="#4eae58">Y</text><text x="575" y="842" fill="#3a66e8">Z</text><text x="586" y="853" fill="#d86a6a">X</text></g>
      </g>
    </svg>
  </div>
</div>

<!-- sketch toolbar -->
<div class="sk d-flex">
  <div class="tb-grp d-flex align-items-center pr4"><svg class="ico"><use href="#skg"/></svg><svg class="ico flagon"><use href="#flag"/></svg><span class="sk-txt">完成草图</span><svg class="ico"><use href="#prof"/></svg><svg class="ico"><use href="#skl"/></svg><svg class="ico"><use href="#ska"/></svg><svg class="ico"><use href="#skc"/></svg><svg class="ico"><use href="#skf"/></svg><svg class="ico"><use href="#skh"/></svg><svg class="ico"><use href="#skr"/></svg><svg class="ico"><use href="#skp"/></svg><svg class="ico"><use href="#skx"/></svg><svg class="ico"><use href="#sko"/></svg><span class="dd"></span></div>
  <span class="skend"></span>
  <div class="tb-grp d-flex align-items-center pl4 pr4"><svg class="ico"><use href="#skt"/></svg><svg class="ico"><use href="#skt2"/></svg><svg class="ico"><use href="#skt3"/></svg></div>
  <span class="skend"></span>
  <div class="tb-grp d-flex align-items-center pl4 pr6"><svg class="ico"><use href="#skd"/></svg><span class="dd"></span></div>
  <span class="skend"></span>
  <div class="tb-grp d-flex align-items-center pl2 pr4"><svg class="ico"><use href="#skn1"/></svg><svg class="ico"><use href="#skn2"/></svg><svg class="ico boxed ms-1"><use href="#skn3"/></svg><span class="dd n"></span></div>
  <span class="skend"></span>
  <div class="tb-grp d-flex align-items-center pl4"><svg class="ico"><use href="#skw"/></svg><svg class="ico boxed"><use href="#sky"/></svg><svg class="ico"><use href="#skz"/></svg></div>
  <span class="skend ms-4"></span>
</div>

<div class="desk"><svg width="1920" height="30"><rect width="1920" height="30" filter="url(#grain)"/></svg></div>

<!-- windows taskbar -->
<div class="taskbar d-flex">
  <div class="startbtn d-flex align-items-center justify-content-center"><svg width="26" height="26"><path d="M1 4l10-1.500V12H1zM13 2.200L25 0v12H13zM1 14h10v9.500L1 22zM13 14h12v12l-12-2z" fill="#fff"/></svg></div>
  <div class="searchbox d-flex align-items-center"><span class="rng"></span>在这里输入你要搜索的内容<svg class="mic" viewBox="0 0 22 32"><rect x="7" y="2" width="8" height="19" rx="4" fill="none" stroke="#333" stroke-width="2"/><path d="M3 15q0 9 8 9t8-9M11 24v5M6 30h10" fill="none" stroke="#333" stroke-width="2"/></svg></div>
  <div class="tk tk-view"><svg viewBox="0 0 40 40" fill="none" stroke="#fff" stroke-width="1.400"><path d="M11 12h17M14 18h12v9H14zM11 32h17M32 8v5M32 20v3M32 28v5"/><path d="M11 12v-4M28 12V8M11 32v4M28 32v4"/></svg></div>
  <div class="tk tk-e act"><svg viewBox="0 0 40 40"><path d="M20 3C9 3 2 12 2 22c5-9 13-12 20-10 5 1 7 5 7 8H13c0 9 10 13 23 8v9c-14 6-32 1-33-15-1-2-1-1-1-2C3 10 11 3 20 3c11 0 18 8 18 20H13" fill="#0f7fd8"/></svg></div>
  <div class="tk tk-nx act"><svg><use href="#nx"/></svg></div>
  <div class="tk tk-p act"><svg viewBox="0 0 40 40"><path d="M6 18C6 6 24 2 32 10c4 8-8 10-10 16-2 8-16 8-16-8z" fill="#dfe6f0" stroke="#888"/><circle cx="14" cy="14" r="3" fill="#3a8ae8"/><circle cx="24" cy="10" r="3" fill="#e8c020"/><circle cx="11" cy="23" r="3" fill="#e84040"/><circle cx="17" cy="29" r="3" fill="#40b050"/><path d="M24 24L33 2l3 1-7 23z" fill="#c89050"/></svg></div>
  <div class="tk tk-f act"><svg viewBox="0 0 40 40"><path d="M5 4h14v6h16v26H5z" fill="#f7d878"/><path d="M5 10h30v6H5z" fill="#fce9a8"/><path d="M14 22h12v14H14z" fill="#3fb0e8"/><path d="M8 4h6v6H8z" fill="#f0c040"/></svg></div>
</div>
<svg class="tray-i tr1" viewBox="0 0 26 26" fill="none" stroke="#fff" stroke-width="1.500"><circle cx="9" cy="11" r="4"/><path d="M2 24q1-8 7-8t7 8"/><circle cx="18" cy="6" r="3"/><path d="M17 12q6 0 7 7"/></svg>
<svg class="tray-i tr2" viewBox="0 0 26 26" fill="none" stroke="#fff" stroke-width="1.500"><path d="M4 18l9-10 9 10"/></svg>
<svg class="tray-i tr3" viewBox="0 0 26 26"><rect x="2" y="6" width="22" height="14" fill="none" stroke="#fff" stroke-width="1.600"/><rect x="4" y="8" width="11" height="10" fill="#fff"/></svg>
<svg class="tray-i tr4" viewBox="0 0 26 26" fill="none" stroke="#aaa" stroke-width="1.400"><path d="M4 24C4 14 12 4 24 3M8 24c0-8 6-14 14-15M12 24c0-5 4-9 8-9"/></svg>
<svg class="tray-i tr5" viewBox="0 0 26 26" fill="none" stroke="#ccc" stroke-width="1.400"><path d="M3 10h5l6-6v18l-6-6H3zM18 10l6 7M24 10l-6 7"/></svg>
<span class="trayzh">中</span>
<svg class="wm-hex" viewBox="0 0 70 88"><path d="M35 1L69 21v46L35 87 1 67V21z" fill="#3c7ea0" fill-opacity=".72"/><path d="M35 22l20 11v24L35 68 15 57V33z" fill="#0f6a92" stroke="#0a2e40" stroke-width="3"/><path d="M15 33l20 11 20-11M35 44v24" stroke="#0a2e40" stroke-width="2" fill="none"/><path d="M6 56L35 8l29 48" stroke="#1c2a30" stroke-width="4" fill="none" opacity=".5"/></svg>
<div class="wm-big">3D世界网</div>
<div class="wm-url">WWW.3DSJW.COM</div>
<div class="clock"><div class="tm">13:54</div><div class="dt">2018/12/9</div></div>
<svg class="tray-i tr6" viewBox="0 0 26 26" fill="none" stroke="#fff" stroke-width="1.400"><path d="M2 3h22v17h-7l-4 4-4-4H2z"/></svg>
<svg class="trayl"><use href="#lred"/></svg>
<div class="ime d-flex align-items-center">中<svg viewBox="0 0 24 24"><path d="M18 2q4 14-12 20 14 0 16-10 1-6-4-10z" fill="#888"/></svg><svg viewBox="0 0 24 24"><circle cx="6" cy="6" r="3" fill="none" stroke="#777" stroke-width="2"/><path d="M18 10q4 4-3 10 0-4-2-5t5-5z" fill="#777"/></svg><svg viewBox="0 0 24 24"><rect x="1" y="5" width="22" height="15" rx="2" fill="#888"/><path d="M4 9h16M4 13h16" stroke="#fff" stroke-dasharray="2 1.500" stroke-width="2"/><path d="M7 17h10" stroke="#fff" stroke-width="2"/></svg><svg viewBox="0 0 24 24"><circle cx="12" cy="12" r="6.500" fill="none" stroke="#777" stroke-width="5"/><circle cx="12" cy="12" r="10" fill="none" stroke="#777" stroke-width="3" stroke-dasharray="3 3"/></svg></div>
<svg class="imel"><use href="#lred"/></svg>

</body>
</html>
